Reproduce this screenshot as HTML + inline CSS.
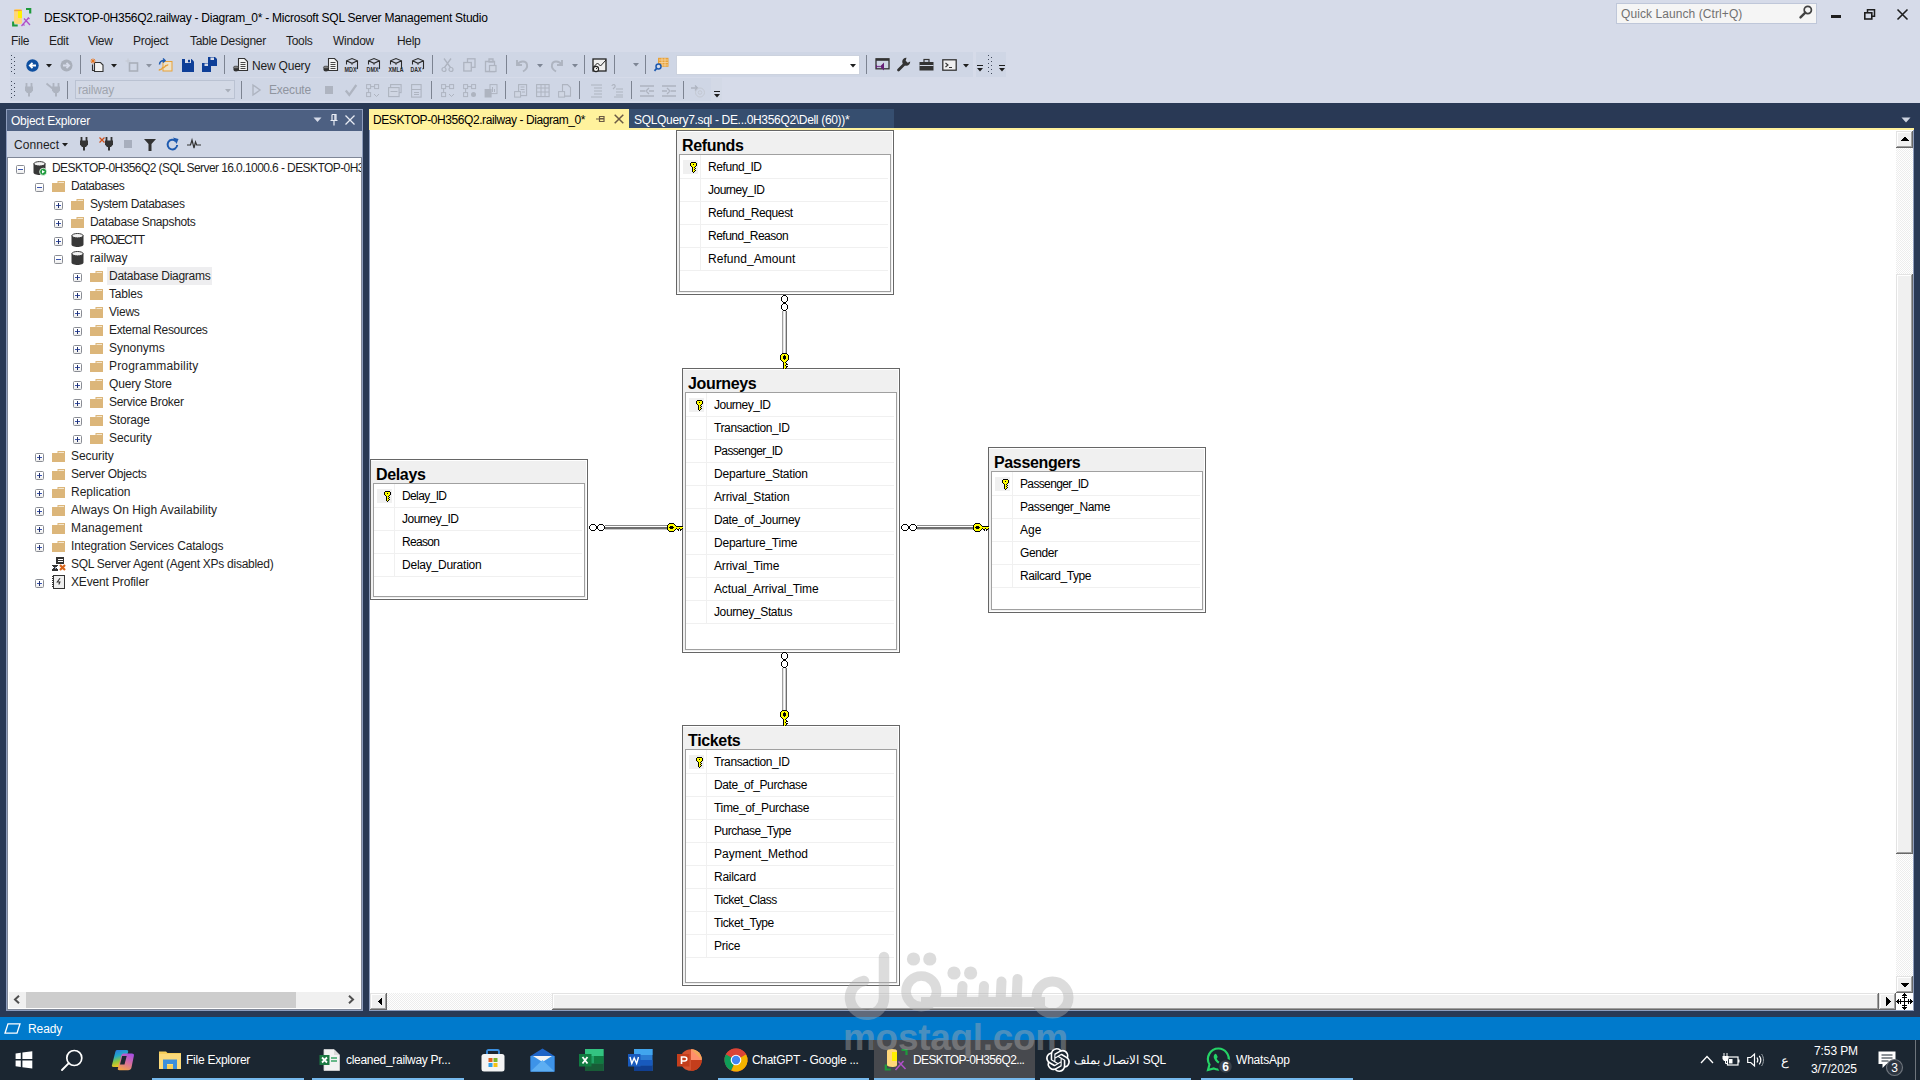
<!DOCTYPE html>
<html><head><meta charset="utf-8"><title>SSMS</title>
<style>
*{margin:0;padding:0;box-sizing:border-box}
html,body{width:1920px;height:1080px;overflow:hidden}
body{position:relative;background:#D6DBE9;font-family:"Liberation Sans",sans-serif;font-size:12px;color:#1E1E1E}
.a{position:absolute}
.t{position:absolute;white-space:nowrap;line-height:16px;letter-spacing:-0.25px}
svg{position:absolute;overflow:visible}
.tb{position:absolute;background:#CFD6E5}
.sep{position:absolute;width:1px;background:#7C8391}
.grip{position:absolute;width:5px;background-image:linear-gradient(#414A5C 0 1px,transparent 1px),linear-gradient(#414A5C 0 1px,transparent 1px);background-size:1px 4px,1px 4px;background-repeat:repeat-y;background-position:0 0,3px 2px}
.row .t{color:#000}
.tree .t{color:#1E1E1E}
.ex{position:absolute;width:9px;height:9px;border:1px solid #8A8D94;border-radius:1.5px;background:linear-gradient(#fff 0,#fff 45%,#ECECEC 100%)}
.ex:before{content:"";position:absolute;left:1px;top:3px;width:5px;height:1px;background:#3A54B0}
.ex.p:after{content:"";position:absolute;left:3px;top:1px;width:1px;height:5px;background:#22306A}
.fold{position:absolute;width:13px;height:10px;background:#DCB67A}
.fold:before{content:"";position:absolute;left:0;top:-2px;width:6px;height:2px;background:#DCB67A}
.dtab{position:absolute;border:1px solid #646464;background:#F0F0F0}
.dtab .hd{position:absolute;left:5px;font-weight:bold;font-size:15px;letter-spacing:-0.2px;color:#000;white-space:nowrap}
.grid{position:absolute;border:1px solid #A0A0A0;border-right-color:#C8C8C8;border-bottom-color:#C8C8C8;background:#fff}
.cr{position:absolute;left:0;right:0;height:23px;border-bottom:1px solid #F0F0F0}
.cr .sel{position:absolute;left:0;top:0;width:21px;height:22px;border-right:1px solid #F0F0F0}
.cr .t{left:28px;top:3px;color:#000;letter-spacing:-0.35px}
.tbicon{position:absolute}
</style></head><body>
<!-- TITLE BAR -->
<svg style="left:12px;top:7px" width="20" height="20" viewBox="0 0 20 20">
 <path d="M1.2 14.5v4h4.5" stroke="#1E9A3C" stroke-width="2.2" fill="none"/>
 <path d="M14 2h4.2v4.5" stroke="#1E9A3C" stroke-width="2.2" fill="none"/>
 <path d="M2 3.5c0-1 1-1.5 4-1.5s4 .5 4 1.5v12c0 1-1 1.5-3 1.5s-5-.5-5-1.5z" fill="#FFD77A"/>
 <path d="M2.2 3.5h7.6" stroke="#F0A040" stroke-width="1.4"/>
 <rect x="6" y="4" width="4" height="7" fill="#FFF000"/>
 <path d="M9.5 19l7-8M12 11.5l6 6.5" stroke="#B050C8" stroke-width="1.3"/>
 <path d="M16 10.5l1.5 1.5M11 17l1.5 1.5" stroke="#B050C8" stroke-width="1.2"/>
</svg>
<div class="t" style="left:44px;top:10px;color:#000;letter-spacing:-0.25px">DESKTOP-0H356Q2.railway - Diagram_0* - Microsoft SQL Server Management Studio</div>
<div class="a" style="left:1616px;top:3px;width:201px;height:21px;background:#F5F5F5;border:1px solid #BFC7D9"></div>
<div class="t" style="left:1621px;top:6px;color:#717171;letter-spacing:0.08px">Quick Launch (Ctrl+Q)</div>
<svg style="left:1799px;top:5px" width="14" height="14" viewBox="0 0 14 14"><circle cx="8.8" cy="5" r="3.6" stroke="#424242" stroke-width="1.7" fill="none"/><path d="M6.3 7.6L1.5 12.4" stroke="#424242" stroke-width="2.4" stroke-linecap="round"/></svg>
<div class="a" style="left:1831px;top:15px;width:10px;height:3px;background:#1E1E1E"></div>
<svg style="left:1864px;top:9px" width="12" height="11" viewBox="0 0 12 11"><path d="M3.5 3V0.8h7v6.4H8" stroke="#1E1E1E" stroke-width="1.5" fill="none"/><rect x="0.8" y="3.8" width="7" height="6.2" stroke="#1E1E1E" stroke-width="1.6" fill="none"/></svg>
<svg style="left:1897px;top:9px" width="11" height="11" viewBox="0 0 11 11"><path d="M0.5 0.5l10 10M10.5 0.5l-10 10" stroke="#1E1E1E" stroke-width="1.6"/></svg>
<!-- MENU -->
<div class="t" style="left:11px;top:33px;letter-spacing:-0.3px">File</div>
<div class="t" style="left:49px;top:33px;letter-spacing:-0.3px">Edit</div>
<div class="t" style="left:88px;top:33px;letter-spacing:-0.3px">View</div>
<div class="t" style="left:133px;top:33px;letter-spacing:-0.3px">Project</div>
<div class="t" style="left:190px;top:33px;letter-spacing:-0.3px">Table Designer</div>
<div class="t" style="left:286px;top:33px;letter-spacing:-0.3px">Tools</div>
<div class="t" style="left:333px;top:33px;letter-spacing:-0.3px">Window</div>
<div class="t" style="left:397px;top:33px;letter-spacing:-0.3px">Help</div>
<!-- TOOLBARS -->
<div class="tb" style="left:10px;top:52px;width:963px;height:25px"></div>
<div class="tb" style="left:975px;top:52px;width:31px;height:25px"></div>
<div class="tb" style="left:10px;top:78px;width:712px;height:23px"></div>
<div class="grip" style="left:11px;top:55px;height:19px"></div>
<div class="grip" style="left:11px;top:81px;height:17px"></div>
<div class="sep" style="left:80px;top:55px;height:19px"></div>
<div class="sep" style="left:224px;top:55px;height:19px"></div>
<div class="sep" style="left:432px;top:55px;height:19px"></div>
<div class="sep" style="left:506px;top:55px;height:19px"></div>
<div class="sep" style="left:584px;top:55px;height:19px"></div>
<div class="sep" style="left:614px;top:55px;height:19px"></div>
<div class="sep" style="left:645px;top:55px;height:19px"></div>
<div class="sep" style="left:866px;top:55px;height:19px"></div>
<div class="sep" style="left:67px;top:81px;height:18px"></div>
<div class="sep" style="left:241px;top:81px;height:18px"></div>
<div class="sep" style="left:431px;top:81px;height:18px"></div>
<div class="sep" style="left:505px;top:81px;height:18px"></div>
<div class="sep" style="left:579px;top:81px;height:18px"></div>
<div class="sep" style="left:631px;top:81px;height:18px"></div>
<div class="sep" style="left:683px;top:81px;height:18px"></div>
<svg style="left:26px;top:59px" width="13" height="13" viewBox="0 0 13 13"><circle cx="6.5" cy="6.5" r="6.2" fill="#0E4FA0"/><path d="M10 6.5H4M6.5 3.8L3.8 6.5l2.7 2.7" stroke="#fff" stroke-width="1.8" fill="none"/></svg>
<svg style="left:46px;top:64px" width="6" height="4" viewBox="0 0 6 4"><path d="M0 0h6l-3 3.5z" fill="#1E1E1E"/></svg>
<svg style="left:60px;top:59px" width="13" height="13" viewBox="0 0 13 13"><circle cx="6.5" cy="6.5" r="6" fill="#A9AFBA"/><path d="M3 6.5h6M6.5 3.8l2.7 2.7-2.7 2.7" stroke="#D6DBE9" stroke-width="1.8" fill="none"/></svg>
<svg style="left:90px;top:58px" width="14" height="14" viewBox="0 0 14 14"><path d="M4.5 4.5h6l2.5 2.5v6.5h-8.5z" fill="#F3F3F3" stroke="#333" stroke-width="1.1"/><path d="M2.5 6.5v6h2" stroke="#333" stroke-width="1.1" fill="none"/><path d="M3 0.5v5M0.5 3h5M1.2 1.2l3.6 3.6M4.8 1.2L1.2 4.8" stroke="#E8741E" stroke-width="1"/></svg>
<svg style="left:111px;top:64px" width="6" height="4" viewBox="0 0 6 4"><path d="M0 0h6l-3 3.5z" fill="#1E1E1E"/></svg>
<svg style="left:125px;top:58px" width="14" height="14" viewBox="0 0 14 14"><rect x="4.5" y="5" width="8" height="8" fill="none" stroke="#A9AFBA" stroke-width="1.6"/><path d="M3 0.5v5M0.5 3h5" stroke="#C4C9D3" stroke-width="1"/></svg>
<svg style="left:146px;top:64px" width="6" height="4" viewBox="0 0 6 4"><path d="M0 0h6l-3 3.5z" fill="#8C93A0"/></svg>
<svg style="left:158px;top:58px" width="15" height="14" viewBox="0 0 15 14"><rect x="5" y="3.5" width="9" height="9.5" fill="#EEE2C8" stroke="#E8A23A" stroke-width="1"/><path d="M1 12.5c1-2 2 0 3-2s2 0 3-2 2 0 3-2" stroke="#E8A23A" stroke-width="1.5" fill="none"/><path d="M1.5 6.5c0-3 2-4 5-4M5 0.5l2 2-2 2" stroke="#1E5AAF" stroke-width="1.5" fill="none"/></svg>
<svg style="left:182px;top:59px" width="12" height="13" viewBox="0 0 12 13"><path d="M0 0h9.5l2.5 2.5V13H0z" fill="#0E3F98"/><rect x="3" y="0" width="6" height="4" fill="#D6DBE9"/><rect x="6" y="0.8" width="2" height="2.5" fill="#0E3F98"/></svg>
<svg style="left:202px;top:57px" width="15" height="15" viewBox="0 0 15 15"><path d="M6 0h7l2 2v7H6z" fill="#0E3F98"/><path d="M0 6h7l2 2v7H0z" fill="#0E3F98"/><rect x="8.5" y="0.5" width="3.5" height="2.5" fill="#D6DBE9"/><rect x="2.5" y="6.5" width="3.5" height="2.5" fill="#D6DBE9"/></svg>
<svg style="left:233px;top:58px" width="15" height="14" viewBox="0 0 15 14"><path d="M5.5 0.5h6l3 3v9h-9z" fill="#F4F4F4" stroke="#333" stroke-width="1.1"/><path d="M7.5 4.5h5M7.5 6.5h5M7.5 8.5h5M7.5 10.5h5" stroke="#333" stroke-width="0.9"/><ellipse cx="3" cy="11" rx="2.6" ry="2.5" fill="#333"/><ellipse cx="3" cy="9.3" rx="2.6" ry="1.2" fill="#888" stroke="#333" stroke-width="0.6"/></svg>
<div class="t" style="left:252px;top:58px;letter-spacing:-0.2px">New Query</div>
<svg style="left:323px;top:58px" width="15" height="14" viewBox="0 0 15 14"><path d="M5.5 0.5h6l3 3v9h-9z" fill="#F4F4F4" stroke="#333" stroke-width="1.1"/><path d="M7.5 4.5h5M7.5 6.5h5M7.5 8.5h5M7.5 10.5h5" stroke="#333" stroke-width="0.9"/><ellipse cx="3" cy="11" rx="2.6" ry="2.5" fill="#333"/><ellipse cx="3" cy="9.3" rx="2.6" ry="1.2" fill="#888" stroke="#333" stroke-width="0.6"/></svg>
<svg style="left:344px;top:58px" width="16" height="15" viewBox="0 0 16 15"><path d="M2.5 6.5V2.8L8 0.5l5.5 2.3v7.7l-1 .5M2.5 2.8L8 5.3l5.5-2.5M8 5.3v1.5" stroke="#2A2A2A" stroke-width="1.1" fill="none"/><text x="0.5" y="13.8" textLength="12" lengthAdjust="spacingAndGlyphs" font-family="Liberation Sans" font-weight="bold" font-size="7.5" fill="#2A2A2A">MDX</text></svg>
<svg style="left:366px;top:58px" width="16" height="15" viewBox="0 0 16 15"><path d="M2.5 6.5V2.8L8 0.5l5.5 2.3v7.7l-1 .5M2.5 2.8L8 5.3l5.5-2.5M8 5.3v1.5" stroke="#2A2A2A" stroke-width="1.1" fill="none"/><text x="0.5" y="13.8" textLength="12" lengthAdjust="spacingAndGlyphs" font-family="Liberation Sans" font-weight="bold" font-size="7.5" fill="#2A2A2A">DMX</text></svg>
<svg style="left:388px;top:58px" width="16" height="15" viewBox="0 0 16 15"><path d="M2.5 6.5V2.8L8 0.5l5.5 2.3v7.7l-1 .5M2.5 2.8L8 5.3l5.5-2.5M8 5.3v1.5" stroke="#2A2A2A" stroke-width="1.1" fill="none"/><text x="0.5" y="13.8" textLength="15" lengthAdjust="spacingAndGlyphs" font-family="Liberation Sans" font-weight="bold" font-size="7.5" fill="#2A2A2A">XMLA</text></svg>
<svg style="left:410px;top:58px" width="16" height="15" viewBox="0 0 16 15"><path d="M2.5 6.5V2.8L8 0.5l5.5 2.3v7.7l-1 .5M2.5 2.8L8 5.3l5.5-2.5M8 5.3v1.5" stroke="#2A2A2A" stroke-width="1.1" fill="none"/><text x="0.5" y="13.8" textLength="11" lengthAdjust="spacingAndGlyphs" font-family="Liberation Sans" font-weight="bold" font-size="7.5" fill="#2A2A2A">DAX</text></svg>
<svg style="left:441px;top:58px" width="13" height="14" viewBox="0 0 13 14"><path d="M3 0.5l6.5 9M10 0.5L3.5 9.5" stroke="#AEB4C0" stroke-width="1.3"/><circle cx="3" cy="11.5" r="2" fill="none" stroke="#AEB4C0" stroke-width="1.2"/><circle cx="10" cy="11.5" r="2" fill="none" stroke="#AEB4C0" stroke-width="1.2"/></svg>
<svg style="left:463px;top:58px" width="13" height="14" viewBox="0 0 13 14"><rect x="4.5" y="0.8" width="7.5" height="8.5" fill="none" stroke="#AEB4C0" stroke-width="1.3"/><rect x="0.8" y="4.5" width="7.5" height="8.5" fill="#D0D6E3" stroke="#AEB4C0" stroke-width="1.3"/></svg>
<svg style="left:485px;top:58px" width="12" height="14" viewBox="0 0 12 14"><path d="M2.5 3.5h7v10h-9v-10h2M4 1h4v3H4z" fill="none" stroke="#AEB4C0" stroke-width="1.3"/><rect x="4.5" y="7.5" width="6.5" height="6" fill="#D0D6E3" stroke="#AEB4C0" stroke-width="1.2"/></svg>
<svg style="left:515px;top:58px" width="14" height="14" viewBox="0 0 14 14"><path d="M2 2v5h5M2.5 6.5C4.5 3 11 2 12 6.5c.7 3-1.5 5.5-4 7" stroke="#AEB4C0" stroke-width="1.9" fill="none"/></svg>
<svg style="left:537px;top:64px" width="6" height="4" viewBox="0 0 6 4"><path d="M0 0h6l-3 3.5z" fill="#7D8594"/></svg>
<svg style="left:550px;top:58px" width="14" height="14" viewBox="0 0 14 14"><path d="M12 2v5H7M11.5 6.5C9.5 3 3 2 2 6.5c-.7 3 1.5 5.5 4 7" stroke="#AEB4C0" stroke-width="1.9" fill="none"/></svg>
<svg style="left:572px;top:64px" width="6" height="4" viewBox="0 0 6 4"><path d="M0 0h6l-3 3.5z" fill="#7D8594"/></svg>
<svg style="left:592px;top:58px" width="15" height="14" viewBox="0 0 15 14"><rect x="1" y="1" width="13" height="12" fill="#F0F0F0" stroke="#222" stroke-width="1.3"/><path d="M1.5 9l4-4 3 3 5.5-6" stroke="#222" stroke-width="1" fill="none"/><circle cx="4" cy="11" r="2.6" fill="#F0F0F0" stroke="#222" stroke-width="1.1"/><path d="M4 11l1.3-1.3" stroke="#222"/></svg>
<svg style="left:633px;top:63px" width="6" height="4" viewBox="0 0 6 4"><path d="M0 0h6l-3 3.5z" fill="#7D8594"/></svg>
<svg style="left:654px;top:57px" width="15" height="15" viewBox="0 0 15 15"><rect x="4" y="0.8" width="10.5" height="9" fill="#E8A23A"/><path d="M5 3h9M5 5.5h9M5 8h9M8 1v8.5M11 1v8.5" stroke="#F6D7A5" stroke-width="0.8"/><circle cx="4.5" cy="9.5" r="2.5" fill="#D6DBE9" stroke="#1E5AAF" stroke-width="1.5"/><path d="M3 11L0.5 13.8" stroke="#1E5AAF" stroke-width="1.8"/></svg>
<div class="a" style="left:676px;top:55px;width:184px;height:20px;background:#fff;border:1px solid #CCD2DE"></div>
<svg style="left:850px;top:64px" width="6" height="4" viewBox="0 0 6 4"><path d="M0 0h6l-3 3.5z" fill="#1E1E1E"/></svg>
<svg style="left:875px;top:58px" width="15" height="14" viewBox="0 0 15 14"><rect x="1" y="0.8" width="13" height="10" fill="none" stroke="#333" stroke-width="1.3"/><rect x="1" y="0.8" width="13" height="2" fill="#333"/><path d="M1 6.5l3 3 5-5v8l-5-5-3 3z" fill="#68217A"/></svg>
<svg style="left:897px;top:57px" width="14" height="15" viewBox="0 0 14 15"><path d="M9.5 0.8a4 4 0 1 0 3.7 3.7l-2.5 1.2-2-2z" fill="#333"/><path d="M8 6.5L1.5 13" stroke="#333" stroke-width="2.8" stroke-linecap="round"/></svg>
<svg style="left:919px;top:59px" width="15" height="12" viewBox="0 0 15 12"><rect x="0.5" y="3" width="14" height="8.5" fill="#333"/><rect x="5" y="0.5" width="5" height="3" fill="none" stroke="#333" stroke-width="1.2"/><path d="M0.5 6.5h14" stroke="#D0D6E3" stroke-width="1"/></svg>
<svg style="left:942px;top:59px" width="15" height="12" viewBox="0 0 15 12"><rect x="0.8" y="0.8" width="13.4" height="10.4" fill="#F0F0F0" stroke="#333" stroke-width="1.3"/><path d="M3.5 4l2.5 2-2.5 2M7 8.5h3" stroke="#333" stroke-width="1.1" fill="none"/></svg>
<svg style="left:963px;top:64px" width="6" height="4" viewBox="0 0 6 4"><path d="M0 0h6l-3 3.5z" fill="#1E1E1E"/></svg>
<svg style="left:977px;top:65px" width="6" height="8" viewBox="0 0 6 8"><path d="M0 0.5h6" stroke="#1E1E1E"/><path d="M0 3h6l-3 3.5z" fill="#1E1E1E"/></svg>
<div class="a" style="left:975px;top:52px;width:1px;height:25px;background:#D6DBE9"></div>
<div class="a" style="left:985px;top:52px;width:11px;height:25px;background:#CFD6E5"></div>
<div class="grip" style="left:988px;top:55px;height:19px"></div>
<svg style="left:999px;top:65px" width="6" height="8" viewBox="0 0 6 8"><path d="M0 0.5h6" stroke="#1E1E1E"/><path d="M0 3h6l-3 3.5z" fill="#1E1E1E"/></svg>
<svg style="left:25px;top:83px" width="8" height="14" viewBox="0 0 8 14"><path d="M1.5 0v4M6.5 0v4" stroke="#AEB4C0" stroke-width="1.8"/><path d="M0 3.5h8v4l-2 2.5h-4l-2-2.5z" fill="#AEB4C0"/><rect x="3" y="9" width="2" height="4.5" fill="#AEB4C0"/></svg>
<svg style="left:46px;top:83px" width="14" height="14" viewBox="0 0 14 14"><path d="M7.5 0v4M12.5 0v4" stroke="#AEB4C0" stroke-width="1.8"/><path d="M6 3.5h8v4l-2 2.5h-4l-2-2.5z" fill="#AEB4C0"/><rect x="9" y="9" width="2" height="4.5" fill="#AEB4C0"/><path d="M0.5 0.5l6 5" stroke="#AEB4C0" stroke-width="1.8"/></svg>
<div class="a" style="left:75px;top:80px;width:160px;height:19px;border:1px solid #BAC2D2;background:#D3D9E6"></div>
<div class="t" style="left:78px;top:82px;color:#A0A5AE;letter-spacing:-0.2px">railway</div>
<svg style="left:225px;top:89px" width="6" height="4" viewBox="0 0 6 4"><path d="M0 0h6l-3 3.5z" fill="#A9AFBA"/></svg>
<svg style="left:252px;top:84px" width="9" height="12" viewBox="0 0 9 12"><path d="M1 1l7 5-7 5z" fill="none" stroke="#AEB4C0" stroke-width="1.4"/></svg>
<div class="t" style="left:269px;top:82px;color:#8F959F;letter-spacing:-0.2px">Execute</div>
<div class="a" style="left:325px;top:86px;width:8px;height:8px;background:#AEB4C0"></div>
<svg style="left:345px;top:84px" width="12" height="12" viewBox="0 0 12 12"><path d="M0.8 6.5l3.5 4.5 7-10" stroke="#AEB4C0" stroke-width="2.2" fill="none"/></svg>
<svg style="left:366px;top:84px" width="15" height="15" viewBox="0 0 15 15"><rect x="0.6" y="0.6" width="4" height="4" fill="none" stroke="#AEB4C0"/><rect x="8.6" y="0.6" width="4" height="4" fill="none" stroke="#AEB4C0"/><path d="M4.6 2.6h4M2.6 4.6v4" stroke="#AEB4C0"/><rect x="0.6" y="8.6" width="4" height="4" fill="none" stroke="#AEB4C0"/><path d="M8 10l2.5 2.5L13 10" fill="none" stroke="#AEB4C0"/></svg>
<svg style="left:388px;top:84px" width="15" height="15" viewBox="0 0 15 15"><rect x="2.6" y="0.6" width="10.5" height="8" fill="none" stroke="#AEB4C0" stroke-width="1.1"/><rect x="0.6" y="3.6" width="10.5" height="9" fill="#D0D6E3" stroke="#AEB4C0" stroke-width="1.1"/><path d="M2.5 7.5h7" stroke="#AEB4C0"/></svg>
<svg style="left:410px;top:84px" width="15" height="15" viewBox="0 0 15 15"><rect x="1.6" y="0.6" width="9.5" height="12.5" fill="none" stroke="#AEB4C0" stroke-width="1.1"/><path d="M1.6 5.5h9.5M4 8.5h5M4 10.5h5" stroke="#AEB4C0"/></svg>
<svg style="left:441px;top:84px" width="15" height="15" viewBox="0 0 15 15"><rect x="0.6" y="0.6" width="4" height="4" fill="none" stroke="#AEB4C0"/><rect x="8.6" y="0.6" width="4" height="4" fill="none" stroke="#AEB4C0"/><path d="M4.6 2.6h4M2.6 4.6v4" stroke="#AEB4C0"/><rect x="0.6" y="8.6" width="4" height="4" fill="none" stroke="#AEB4C0"/><path d="M8 10l2.5 2.5L13 10" fill="none" stroke="#AEB4C0"/></svg>
<svg style="left:463px;top:84px" width="15" height="15" viewBox="0 0 15 15"><rect x="0.6" y="0.6" width="4" height="4" fill="none" stroke="#AEB4C0"/><rect x="8.6" y="0.6" width="4" height="4" fill="none" stroke="#AEB4C0"/><path d="M4.6 2.6h4M2.6 4.6v4" stroke="#AEB4C0"/><rect x="0.6" y="8.6" width="4" height="4" fill="none" stroke="#AEB4C0"/><circle cx="10.5" cy="10.5" r="2.5" fill="#AEB4C0"/></svg>
<svg style="left:484px;top:84px" width="15" height="15" viewBox="0 0 15 15"><rect x="0.6" y="5" width="7" height="8.5" fill="#AEB4C0"/><rect x="6" y="0.6" width="7" height="9" fill="none" stroke="#AEB4C0"/><path d="M8.5 3v5M10.5 5v3" stroke="#AEB4C0"/></svg>
<svg style="left:514px;top:84px" width="15" height="15" viewBox="0 0 15 15"><rect x="4.6" y="0.6" width="8" height="11" fill="none" stroke="#AEB4C0" stroke-width="1.1"/><path d="M6.5 3h4M6.5 5.5h4M8 8h3" stroke="#AEB4C0"/><rect x="0.6" y="7.6" width="6" height="5.5" fill="#D0D6E3" stroke="#AEB4C0"/></svg>
<svg style="left:536px;top:84px" width="15" height="15" viewBox="0 0 15 15"><rect x="0.6" y="0.6" width="12.5" height="12" fill="none" stroke="#AEB4C0" stroke-width="1.1"/><path d="M0.6 4h12.5M0.6 8h12.5M5 0.6v12M9 0.6v12" stroke="#AEB4C0"/></svg>
<svg style="left:558px;top:84px" width="15" height="15" viewBox="0 0 15 15"><path d="M4.5 0.6h5l3 3v8.5h-8z" fill="none" stroke="#AEB4C0" stroke-width="1.1"/><rect x="0.6" y="7.6" width="6" height="5.5" fill="#D0D6E3" stroke="#AEB4C0"/></svg>
<svg style="left:590px;top:84px" width="15" height="15" viewBox="0 0 15 15"><path d="M1 1h11M4 4h8M4 7h8M4 10h8M1 13h11" stroke="#AEB4C0" stroke-width="1.1"/></svg>
<svg style="left:611px;top:84px" width="15" height="15" viewBox="0 0 15 15"><path d="M1 2c0-2 4-2 3 1l-2 2M5 5h7M5 8h7M5 11h7M3 13h9" stroke="#AEB4C0" stroke-width="1.1" fill="none"/></svg>
<svg style="left:640px;top:84px" width="15" height="15" viewBox="0 0 15 15"><path d="M0 7h5M9 7h5M0 2h14M0 12h14M9 4l-3 3 3 3" stroke="#AEB4C0" stroke-width="1.3" fill="none"/></svg>
<svg style="left:662px;top:84px" width="15" height="15" viewBox="0 0 15 15"><path d="M0 7h5M9 7h5M0 2h14M0 12h14M5 4l3 3-3 3" stroke="#AEB4C0" stroke-width="1.3" fill="none"/></svg>
<svg style="left:691px;top:84px" width="15" height="15" viewBox="0 0 15 15"><path d="M0 4h6M4 1.5L6.5 4 4 6.5" stroke="#AEB4C0" stroke-width="1.3" fill="none"/><circle cx="9" cy="8.5" r="4.5" fill="none" stroke="#C4C9D3" stroke-width="1"/><circle cx="9" cy="8.5" r="1.8" fill="none" stroke="#C4C9D3" stroke-width="1"/></svg>
<div class="a" style="left:711px;top:78px;width:11px;height:23px;background:#D3D9E6"></div>
<svg style="left:714px;top:91px" width="6" height="8" viewBox="0 0 6 8"><path d="M0 0.5h6" stroke="#1E1E1E"/><path d="M0 3h6l-3 3.5z" fill="#1E1E1E"/></svg>
<!-- DARK FRAME -->
<div class="a" style="left:0;top:103px;width:1920px;height:914px;background:#293955"></div>
<!-- OBJECT EXPLORER -->
<div class="a" style="left:6px;top:109px;width:357px;height:902px;background:#CFD6E5;border:1px solid #8E9DBD"></div>
<div class="a" style="left:7px;top:110px;width:355px;height:21px;background:#4D6082"></div>
<div class="t" style="left:11px;top:113px;color:#fff">Object Explorer</div>
<svg style="left:313px;top:117px" width="10" height="6" viewBox="0 0 10 6"><path d="M0.5 0.5h8l-4 4.5z" fill="#D6DBE9"/></svg>
<svg style="left:330px;top:114px" width="8" height="12" viewBox="0 0 8 12"><path d="M2 0.5h4v6M2 0.5v6M0.5 6.5h7M4 6.5v5" stroke="#E8ECF4" stroke-width="1.2" fill="none"/><rect x="4.3" y="1" width="1.4" height="5" fill="#E8ECF4"/></svg>
<svg style="left:345px;top:115px" width="10" height="10" viewBox="0 0 10 10"><path d="M0.5 0.5l9 9M9.5 0.5l-9 9" stroke="#E8ECF4" stroke-width="1.3"/></svg>
<div class="t" style="left:14px;top:137px;color:#1E1E1E;letter-spacing:0.05px">Connect</div>
<svg style="left:62px;top:143px" width="6" height="4" viewBox="0 0 6 4"><path d="M0 0h6l-3 3.5z" fill="#1E1E1E"/></svg>
<svg style="left:80px;top:137px" width="8" height="14" viewBox="0 0 8 14"><path d="M1.5 0v4M6.5 0v4" stroke="#333" stroke-width="1.8"/><path d="M0 3.5h8v4l-2 2.5h-4l-2-2.5z" fill="#333"/><rect x="3" y="9" width="2" height="4.5" fill="#333"/></svg>
<svg style="left:99px;top:137px" width="6" height="6" viewBox="0 0 6 6"><path d="M0.5 0.5l5 5M5.5 0.5l-5 5" stroke="#D0501A" stroke-width="1.2"/></svg>
<svg style="left:105px;top:137px" width="8" height="14" viewBox="0 0 8 14"><path d="M1.5 0v4M6.5 0v4" stroke="#333" stroke-width="1.8"/><path d="M0 3.5h8v4l-2 2.5h-4l-2-2.5z" fill="#333"/><rect x="3" y="9" width="2" height="4.5" fill="#333"/></svg>
<div class="a" style="left:124px;top:140px;width:8px;height:8px;background:#A7AEBD"></div>
<svg style="left:144px;top:139px" width="12" height="12" viewBox="0 0 12 12"><path d="M0 0h12l-4.5 5v7h-3v-7z" fill="#333"/></svg>
<svg style="left:166px;top:137px" width="13" height="14" viewBox="0 0 13 14"><path d="M9.8 4.2A4.8 4.8 0 1 0 11.2 8" stroke="#1E5AAF" stroke-width="2" fill="none"/><path d="M7 0.5l5.5 1.5-2 5z" fill="#1E5AAF"/></svg>
<svg style="left:187px;top:139px" width="14" height="10" viewBox="0 0 14 10"><path d="M0 6h3.5l1.5-5 2 8 1.5-6 1.2 3H14" stroke="#333" stroke-width="1.2" fill="none"/></svg>
<div class="a" style="left:7px;top:157px;width:355px;height:853px;background:#fff;border:1px solid #7F8797"></div>
<div class="a tree" style="left:7px;top:159px;width:354px;height:832px;overflow:hidden">
<div class="ex " style="left:9px;top:6px"></div>
<svg style="left:26px;top:2px" width="14" height="15" viewBox="0 0 14 15"><path d="M0.5 2.5v9c0 1.4 2.7 2.5 6 2.5s6-1.1 6-2.5v-9z" fill="#383838"/><ellipse cx="6.5" cy="2.8" rx="5.6" ry="2.2" fill="#F2F2F2" stroke="#383838" stroke-width="1"/><circle cx="10.2" cy="10.8" r="3.6" fill="#1E9A3C" stroke="#fff" stroke-width="0.8"/><path d="M9 9l3 1.8-3 1.8z" fill="#fff"/></svg>
<div class="t" style="left:45px;top:1px;letter-spacing:-0.58px">DESKTOP-0H356Q2 (SQL Server 16.0.1000.6 - DESKTOP-0H356Q2\Dell)</div>
<div class="ex " style="left:28px;top:24px"></div>
<svg style="left:45px;top:22px" width="13" height="11" viewBox="0 0 13 11"><path d="M0 2h5.5V0H13v11H0z" fill="#DCB67A"/><path d="M6.5 1.5h5.5" stroke="#F4E7CF" stroke-width="1"/></svg>
<div class="t" style="left:64px;top:19px;letter-spacing:-0.458px">Databases</div>
<div class="ex p" style="left:47px;top:42px"></div>
<svg style="left:64px;top:40px" width="13" height="11" viewBox="0 0 13 11"><path d="M0 2h5.5V0H13v11H0z" fill="#DCB67A"/><path d="M6.5 1.5h5.5" stroke="#F4E7CF" stroke-width="1"/></svg>
<div class="t" style="left:83px;top:37px;letter-spacing:-0.388px">System Databases</div>
<div class="ex p" style="left:47px;top:60px"></div>
<svg style="left:64px;top:58px" width="13" height="11" viewBox="0 0 13 11"><path d="M0 2h5.5V0H13v11H0z" fill="#DCB67A"/><path d="M6.5 1.5h5.5" stroke="#F4E7CF" stroke-width="1"/></svg>
<div class="t" style="left:83px;top:55px;letter-spacing:-0.328px">Database Snapshots</div>
<div class="ex p" style="left:47px;top:78px"></div>
<svg style="left:64px;top:74px" width="13" height="14" viewBox="0 0 13 14"><path d="M0.5 2.5v9c0 1.4 2.7 2.5 6 2.5s6-1.1 6-2.5v-9z" fill="#383838"/><ellipse cx="6.5" cy="2.7" rx="5.6" ry="2.2" fill="#F2F2F2" stroke="#383838" stroke-width="1"/></svg>
<div class="t" style="left:83px;top:73px;letter-spacing:-1.179px">PROJECTT</div>
<div class="ex " style="left:47px;top:96px"></div>
<svg style="left:64px;top:92px" width="13" height="14" viewBox="0 0 13 14"><path d="M0.5 2.5v9c0 1.4 2.7 2.5 6 2.5s6-1.1 6-2.5v-9z" fill="#383838"/><ellipse cx="6.5" cy="2.7" rx="5.6" ry="2.2" fill="#F2F2F2" stroke="#383838" stroke-width="1"/></svg>
<div class="t" style="left:83px;top:91px;letter-spacing:0.037px">railway</div>
<div class="a" style="left:100px;top:108px;width:105px;height:18px;background:#EEEEF0"></div>
<div class="ex p" style="left:66px;top:114px"></div>
<svg style="left:83px;top:112px" width="13" height="11" viewBox="0 0 13 11"><path d="M0 2h5.5V0H13v11H0z" fill="#DCB67A"/><path d="M6.5 1.5h5.5" stroke="#F4E7CF" stroke-width="1"/></svg>
<div class="t" style="left:102px;top:109px;letter-spacing:-0.274px">Database Diagrams</div>
<div class="ex p" style="left:66px;top:132px"></div>
<svg style="left:83px;top:130px" width="13" height="11" viewBox="0 0 13 11"><path d="M0 2h5.5V0H13v11H0z" fill="#DCB67A"/><path d="M6.5 1.5h5.5" stroke="#F4E7CF" stroke-width="1"/></svg>
<div class="t" style="left:102px;top:127px;letter-spacing:-0.198px">Tables</div>
<div class="ex p" style="left:66px;top:150px"></div>
<svg style="left:83px;top:148px" width="13" height="11" viewBox="0 0 13 11"><path d="M0 2h5.5V0H13v11H0z" fill="#DCB67A"/><path d="M6.5 1.5h5.5" stroke="#F4E7CF" stroke-width="1"/></svg>
<div class="t" style="left:102px;top:145px;letter-spacing:-0.238px">Views</div>
<div class="ex p" style="left:66px;top:168px"></div>
<svg style="left:83px;top:166px" width="13" height="11" viewBox="0 0 13 11"><path d="M0 2h5.5V0H13v11H0z" fill="#DCB67A"/><path d="M6.5 1.5h5.5" stroke="#F4E7CF" stroke-width="1"/></svg>
<div class="t" style="left:102px;top:163px;letter-spacing:-0.345px">External Resources</div>
<div class="ex p" style="left:66px;top:186px"></div>
<svg style="left:83px;top:184px" width="13" height="11" viewBox="0 0 13 11"><path d="M0 2h5.5V0H13v11H0z" fill="#DCB67A"/><path d="M6.5 1.5h5.5" stroke="#F4E7CF" stroke-width="1"/></svg>
<div class="t" style="left:102px;top:181px;letter-spacing:-0.053px">Synonyms</div>
<div class="ex p" style="left:66px;top:204px"></div>
<svg style="left:83px;top:202px" width="13" height="11" viewBox="0 0 13 11"><path d="M0 2h5.5V0H13v11H0z" fill="#DCB67A"/><path d="M6.5 1.5h5.5" stroke="#F4E7CF" stroke-width="1"/></svg>
<div class="t" style="left:102px;top:199px;letter-spacing:0.187px">Programmability</div>
<div class="ex p" style="left:66px;top:222px"></div>
<svg style="left:83px;top:220px" width="13" height="11" viewBox="0 0 13 11"><path d="M0 2h5.5V0H13v11H0z" fill="#DCB67A"/><path d="M6.5 1.5h5.5" stroke="#F4E7CF" stroke-width="1"/></svg>
<div class="t" style="left:102px;top:217px;letter-spacing:-0.172px">Query Store</div>
<div class="ex p" style="left:66px;top:240px"></div>
<svg style="left:83px;top:238px" width="13" height="11" viewBox="0 0 13 11"><path d="M0 2h5.5V0H13v11H0z" fill="#DCB67A"/><path d="M6.5 1.5h5.5" stroke="#F4E7CF" stroke-width="1"/></svg>
<div class="t" style="left:102px;top:235px;letter-spacing:-0.292px">Service Broker</div>
<div class="ex p" style="left:66px;top:258px"></div>
<svg style="left:83px;top:256px" width="13" height="11" viewBox="0 0 13 11"><path d="M0 2h5.5V0H13v11H0z" fill="#DCB67A"/><path d="M6.5 1.5h5.5" stroke="#F4E7CF" stroke-width="1"/></svg>
<div class="t" style="left:102px;top:253px;letter-spacing:-0.204px">Storage</div>
<div class="ex p" style="left:66px;top:276px"></div>
<svg style="left:83px;top:274px" width="13" height="11" viewBox="0 0 13 11"><path d="M0 2h5.5V0H13v11H0z" fill="#DCB67A"/><path d="M6.5 1.5h5.5" stroke="#F4E7CF" stroke-width="1"/></svg>
<div class="t" style="left:102px;top:271px;letter-spacing:-0.081px">Security</div>
<div class="ex p" style="left:28px;top:294px"></div>
<svg style="left:45px;top:292px" width="13" height="11" viewBox="0 0 13 11"><path d="M0 2h5.5V0H13v11H0z" fill="#DCB67A"/><path d="M6.5 1.5h5.5" stroke="#F4E7CF" stroke-width="1"/></svg>
<div class="t" style="left:64px;top:289px;letter-spacing:-0.081px">Security</div>
<div class="ex p" style="left:28px;top:312px"></div>
<svg style="left:45px;top:310px" width="13" height="11" viewBox="0 0 13 11"><path d="M0 2h5.5V0H13v11H0z" fill="#DCB67A"/><path d="M6.5 1.5h5.5" stroke="#F4E7CF" stroke-width="1"/></svg>
<div class="t" style="left:64px;top:307px;letter-spacing:-0.276px">Server Objects</div>
<div class="ex p" style="left:28px;top:330px"></div>
<svg style="left:45px;top:328px" width="13" height="11" viewBox="0 0 13 11"><path d="M0 2h5.5V0H13v11H0z" fill="#DCB67A"/><path d="M6.5 1.5h5.5" stroke="#F4E7CF" stroke-width="1"/></svg>
<div class="t" style="left:64px;top:325px;letter-spacing:0.012px">Replication</div>
<div class="ex p" style="left:28px;top:348px"></div>
<svg style="left:45px;top:346px" width="13" height="11" viewBox="0 0 13 11"><path d="M0 2h5.5V0H13v11H0z" fill="#DCB67A"/><path d="M6.5 1.5h5.5" stroke="#F4E7CF" stroke-width="1"/></svg>
<div class="t" style="left:64px;top:343px;letter-spacing:0.059px">Always On High Availability</div>
<div class="ex p" style="left:28px;top:366px"></div>
<svg style="left:45px;top:364px" width="13" height="11" viewBox="0 0 13 11"><path d="M0 2h5.5V0H13v11H0z" fill="#DCB67A"/><path d="M6.5 1.5h5.5" stroke="#F4E7CF" stroke-width="1"/></svg>
<div class="t" style="left:64px;top:361px;letter-spacing:0.146px">Management</div>
<div class="ex p" style="left:28px;top:384px"></div>
<svg style="left:45px;top:382px" width="13" height="11" viewBox="0 0 13 11"><path d="M0 2h5.5V0H13v11H0z" fill="#DCB67A"/><path d="M6.5 1.5h5.5" stroke="#F4E7CF" stroke-width="1"/></svg>
<div class="t" style="left:64px;top:379px;letter-spacing:-0.155px">Integration Services Catalogs</div>
<svg style="left:45px;top:398px" width="15" height="15" viewBox="0 0 15 15" shape-rendering="crispEdges"><rect x="4" y="0" width="8" height="6.5" fill="#333"/><path d="M5.5 2.5h5M5.5 4h5" stroke="#fff" stroke-width="1"/><path d="M0 7.5h6v1.2L3.8 10.7 6 12.8V14H0v-1.2l2.2-2.1L0 8.7z" fill="#333"/><rect x="2.5" y="9.5" width="1" height="2" fill="#9AA6C8"/></svg><svg style="left:52px;top:405px" width="7" height="7" viewBox="0 0 7 7"><path d="M1 1l5 5M6 1L1 6" stroke="#D9651A" stroke-width="2.2"/></svg>
<div class="t" style="left:64px;top:397px;letter-spacing:-0.269px">SQL Server Agent (Agent XPs disabled)</div>
<div class="ex p" style="left:28px;top:420px"></div>
<svg style="left:45px;top:416px" width="13" height="14" viewBox="0 0 13 14" shape-rendering="crispEdges"><rect x="1.5" y="0.5" width="11" height="13" fill="#EEEEEE" stroke="#333" stroke-width="1"/><path d="M0 1.5h1M0 3.5h1M0 5.5h1M0 7.5h1M0 9.5h1M0 11.5h1" stroke="#333" stroke-width="1"/></svg><svg style="left:45px;top:416px" width="13" height="14" viewBox="0 0 13 14"><path d="M8 3.2L5.3 7h2.6L6.8 9.5" stroke="#333" stroke-width="1.1" fill="none"/></svg>
<div class="t" style="left:64px;top:415px;letter-spacing:-0.152px">XEvent Profiler</div>
</div>
<div class="a" style="left:9px;top:992px;width:351px;height:16px;background:#F0F0F0"></div>
<div class="a" style="left:26px;top:992px;width:270px;height:16px;background:#CDCDCD"></div>
<svg style="left:13px;top:995px" width="7" height="9" viewBox="0 0 7 9"><path d="M6 0.8L2 4.5l4 3.7" stroke="#505050" stroke-width="2" fill="none"/></svg>
<svg style="left:348px;top:995px" width="7" height="9" viewBox="0 0 7 9"><path d="M1 0.8l4 3.7-4 3.7" stroke="#505050" stroke-width="2" fill="none"/></svg>
<!-- DOC WELL -->
<div class="a" style="left:369px;top:109px;width:260px;height:21px;background:#FFF29D"></div>
<div class="t" style="left:373px;top:112px;color:#000;letter-spacing:-0.42px">DESKTOP-0H356Q2.railway - Diagram_0*</div>
<svg style="left:596px;top:115px" width="9" height="8" viewBox="0 0 9 8"><path d="M0 4h3M3.5 1v6M3.5 1.5h4.5v5H3.5" stroke="#6B5A45" stroke-width="1.2" fill="none"/><rect x="4" y="3" width="4" height="1.5" fill="#6B5A45"/></svg>
<svg style="left:614px;top:114px" width="10" height="10" viewBox="0 0 10 10"><path d="M0.7 0.7l8.6 8.6M9.3 0.7L0.7 9.3" stroke="#6B5A45" stroke-width="1.5"/></svg>
<div class="a" style="left:629px;top:109px;width:265px;height:19px;background:#364E6F"></div>
<div class="t" style="left:634px;top:112px;color:#fff;letter-spacing:-0.32px">SQLQuery7.sql - DE...0H356Q2\Dell (60))*</div>
<svg style="left:1901px;top:117px" width="10" height="6" viewBox="0 0 10 6"><path d="M0.5 0.5h9l-4.5 5z" fill="#CED4E0"/></svg>
<div class="a" style="left:369px;top:128px;width:1545px;height:2px;background:#FFF29D"></div>
<div class="a" style="left:369px;top:130px;width:1545px;height:881px;background:#fff;border:1px solid #8E9DBD;border-top:none"></div>
<!-- DIAGRAM -->
<div class="a" style="left:676px;top:130px;width:218px;height:165px;background:#F0F0F0;border:1px solid #666;box-shadow:inset -1px -1px 0 #fff, inset 0 1px 0 #fff"></div>
<div class="t" style="left:682px;top:138px;font-weight:bold;font-size:16px;letter-spacing:-0.35px;color:#000">Refunds</div>
<div class="a" style="left:679px;top:154px;width:212px;height:138px;background:#fff;border:1px solid #A0A0A0"></div>
<div class="a" style="left:700px;top:155px;width:1px;height:115px;background:#F0F0F0"></div>
<div class="a" style="left:680px;top:178px;width:208px;height:1px;background:#F0F0F0"></div>
<div class="a" style="left:680px;top:201px;width:208px;height:1px;background:#F0F0F0"></div>
<div class="a" style="left:680px;top:224px;width:208px;height:1px;background:#F0F0F0"></div>
<div class="a" style="left:680px;top:247px;width:208px;height:1px;background:#F0F0F0"></div>
<div class="a" style="left:680px;top:270px;width:208px;height:1px;background:#F0F0F0"></div>
<div class="a" style="left:683px;top:160px;width:15px;height:14px;background:#F0F0F0"></div>
<svg style="left:690px;top:162px" width="7" height="11" shape-rendering="crispEdges"><rect x="1" y="0" width="5" height="1" fill="#000"/><rect x="0" y="1" width="1" height="1" fill="#000"/><rect x="1" y="1" width="5" height="1" fill="#FFFF00"/><rect x="6" y="1" width="1" height="1" fill="#000"/><rect x="0" y="2" width="1" height="1" fill="#000"/><rect x="1" y="2" width="2" height="1" fill="#FFFF00"/><rect x="3" y="2" width="1" height="1" fill="#000"/><rect x="4" y="2" width="2" height="1" fill="#FFFF00"/><rect x="6" y="2" width="1" height="1" fill="#000"/><rect x="0" y="3" width="1" height="1" fill="#000"/><rect x="1" y="3" width="5" height="1" fill="#FFFF00"/><rect x="6" y="3" width="1" height="1" fill="#000"/><rect x="1" y="4" width="1" height="1" fill="#000"/><rect x="2" y="4" width="3" height="1" fill="#FFFF00"/><rect x="5" y="4" width="1" height="1" fill="#000"/><rect x="2" y="5" width="1" height="1" fill="#000"/><rect x="3" y="5" width="1" height="1" fill="#FFFF00"/><rect x="4" y="5" width="1" height="1" fill="#000"/><rect x="2" y="6" width="1" height="1" fill="#000"/><rect x="3" y="6" width="2" height="1" fill="#FFFF00"/><rect x="5" y="6" width="1" height="1" fill="#000"/><rect x="2" y="7" width="1" height="1" fill="#000"/><rect x="3" y="7" width="1" height="1" fill="#FFFF00"/><rect x="4" y="7" width="1" height="1" fill="#000"/><rect x="2" y="8" width="1" height="1" fill="#000"/><rect x="3" y="8" width="2" height="1" fill="#FFFF00"/><rect x="5" y="8" width="1" height="1" fill="#000"/><rect x="2" y="9" width="1" height="1" fill="#000"/><rect x="3" y="9" width="1" height="1" fill="#FFFF00"/><rect x="4" y="9" width="1" height="1" fill="#000"/><rect x="3" y="10" width="1" height="1" fill="#000"/></svg>
<div class="t" style="left:708px;top:159px;color:#000;letter-spacing:-0.421px">Refund_ID</div>
<div class="t" style="left:708px;top:182px;color:#000;letter-spacing:-0.497px">Journey_ID</div>
<div class="t" style="left:708px;top:205px;color:#000;letter-spacing:-0.382px">Refund_Request</div>
<div class="t" style="left:708px;top:228px;color:#000;letter-spacing:-0.511px">Refund_Reason</div>
<div class="t" style="left:708px;top:251px;color:#000;letter-spacing:0.048px">Refund_Amount</div>
<div class="a" style="left:682px;top:368px;width:218px;height:285px;background:#F0F0F0;border:1px solid #666;box-shadow:inset -1px -1px 0 #fff, inset 0 1px 0 #fff"></div>
<div class="t" style="left:688px;top:376px;font-weight:bold;font-size:16px;letter-spacing:-0.35px;color:#000">Journeys</div>
<div class="a" style="left:685px;top:392px;width:212px;height:258px;background:#fff;border:1px solid #A0A0A0"></div>
<div class="a" style="left:706px;top:393px;width:1px;height:230px;background:#F0F0F0"></div>
<div class="a" style="left:686px;top:416px;width:208px;height:1px;background:#F0F0F0"></div>
<div class="a" style="left:686px;top:439px;width:208px;height:1px;background:#F0F0F0"></div>
<div class="a" style="left:686px;top:462px;width:208px;height:1px;background:#F0F0F0"></div>
<div class="a" style="left:686px;top:485px;width:208px;height:1px;background:#F0F0F0"></div>
<div class="a" style="left:686px;top:508px;width:208px;height:1px;background:#F0F0F0"></div>
<div class="a" style="left:686px;top:531px;width:208px;height:1px;background:#F0F0F0"></div>
<div class="a" style="left:686px;top:554px;width:208px;height:1px;background:#F0F0F0"></div>
<div class="a" style="left:686px;top:577px;width:208px;height:1px;background:#F0F0F0"></div>
<div class="a" style="left:686px;top:600px;width:208px;height:1px;background:#F0F0F0"></div>
<div class="a" style="left:686px;top:623px;width:208px;height:1px;background:#F0F0F0"></div>
<div class="a" style="left:689px;top:398px;width:15px;height:14px;background:#F0F0F0"></div>
<svg style="left:696px;top:400px" width="7" height="11" shape-rendering="crispEdges"><rect x="1" y="0" width="5" height="1" fill="#000"/><rect x="0" y="1" width="1" height="1" fill="#000"/><rect x="1" y="1" width="5" height="1" fill="#FFFF00"/><rect x="6" y="1" width="1" height="1" fill="#000"/><rect x="0" y="2" width="1" height="1" fill="#000"/><rect x="1" y="2" width="2" height="1" fill="#FFFF00"/><rect x="3" y="2" width="1" height="1" fill="#000"/><rect x="4" y="2" width="2" height="1" fill="#FFFF00"/><rect x="6" y="2" width="1" height="1" fill="#000"/><rect x="0" y="3" width="1" height="1" fill="#000"/><rect x="1" y="3" width="5" height="1" fill="#FFFF00"/><rect x="6" y="3" width="1" height="1" fill="#000"/><rect x="1" y="4" width="1" height="1" fill="#000"/><rect x="2" y="4" width="3" height="1" fill="#FFFF00"/><rect x="5" y="4" width="1" height="1" fill="#000"/><rect x="2" y="5" width="1" height="1" fill="#000"/><rect x="3" y="5" width="1" height="1" fill="#FFFF00"/><rect x="4" y="5" width="1" height="1" fill="#000"/><rect x="2" y="6" width="1" height="1" fill="#000"/><rect x="3" y="6" width="2" height="1" fill="#FFFF00"/><rect x="5" y="6" width="1" height="1" fill="#000"/><rect x="2" y="7" width="1" height="1" fill="#000"/><rect x="3" y="7" width="1" height="1" fill="#FFFF00"/><rect x="4" y="7" width="1" height="1" fill="#000"/><rect x="2" y="8" width="1" height="1" fill="#000"/><rect x="3" y="8" width="2" height="1" fill="#FFFF00"/><rect x="5" y="8" width="1" height="1" fill="#000"/><rect x="2" y="9" width="1" height="1" fill="#000"/><rect x="3" y="9" width="1" height="1" fill="#FFFF00"/><rect x="4" y="9" width="1" height="1" fill="#000"/><rect x="3" y="10" width="1" height="1" fill="#000"/></svg>
<div class="t" style="left:714px;top:397px;color:#000;letter-spacing:-0.497px">Journey_ID</div>
<div class="t" style="left:714px;top:420px;color:#000;letter-spacing:-0.386px">Transaction_ID</div>
<div class="t" style="left:714px;top:443px;color:#000;letter-spacing:-0.64px">Passenger_ID</div>
<div class="t" style="left:714px;top:466px;color:#000;letter-spacing:-0.212px">Departure_Station</div>
<div class="t" style="left:714px;top:489px;color:#000;letter-spacing:-0.167px">Arrival_Station</div>
<div class="t" style="left:714px;top:512px;color:#000;letter-spacing:-0.371px">Date_of_Journey</div>
<div class="t" style="left:714px;top:535px;color:#000;letter-spacing:-0.22px">Departure_Time</div>
<div class="t" style="left:714px;top:558px;color:#000;letter-spacing:-0.136px">Arrival_Time</div>
<div class="t" style="left:714px;top:581px;color:#000;letter-spacing:-0.129px">Actual_Arrival_Time</div>
<div class="t" style="left:714px;top:604px;color:#000;letter-spacing:-0.383px">Journey_Status</div>
<div class="a" style="left:370px;top:459px;width:218px;height:141px;background:#F0F0F0;border:1px solid #666;box-shadow:inset -1px -1px 0 #fff, inset 0 1px 0 #fff"></div>
<div class="t" style="left:376px;top:467px;font-weight:bold;font-size:16px;letter-spacing:-0.35px;color:#000">Delays</div>
<div class="a" style="left:373px;top:483px;width:212px;height:114px;background:#fff;border:1px solid #A0A0A0"></div>
<div class="a" style="left:394px;top:484px;width:1px;height:92px;background:#F0F0F0"></div>
<div class="a" style="left:374px;top:507px;width:208px;height:1px;background:#F0F0F0"></div>
<div class="a" style="left:374px;top:530px;width:208px;height:1px;background:#F0F0F0"></div>
<div class="a" style="left:374px;top:553px;width:208px;height:1px;background:#F0F0F0"></div>
<div class="a" style="left:374px;top:576px;width:208px;height:1px;background:#F0F0F0"></div>
<div class="a" style="left:377px;top:489px;width:15px;height:14px;background:#F0F0F0"></div>
<svg style="left:384px;top:491px" width="7" height="11" shape-rendering="crispEdges"><rect x="1" y="0" width="5" height="1" fill="#000"/><rect x="0" y="1" width="1" height="1" fill="#000"/><rect x="1" y="1" width="5" height="1" fill="#FFFF00"/><rect x="6" y="1" width="1" height="1" fill="#000"/><rect x="0" y="2" width="1" height="1" fill="#000"/><rect x="1" y="2" width="2" height="1" fill="#FFFF00"/><rect x="3" y="2" width="1" height="1" fill="#000"/><rect x="4" y="2" width="2" height="1" fill="#FFFF00"/><rect x="6" y="2" width="1" height="1" fill="#000"/><rect x="0" y="3" width="1" height="1" fill="#000"/><rect x="1" y="3" width="5" height="1" fill="#FFFF00"/><rect x="6" y="3" width="1" height="1" fill="#000"/><rect x="1" y="4" width="1" height="1" fill="#000"/><rect x="2" y="4" width="3" height="1" fill="#FFFF00"/><rect x="5" y="4" width="1" height="1" fill="#000"/><rect x="2" y="5" width="1" height="1" fill="#000"/><rect x="3" y="5" width="1" height="1" fill="#FFFF00"/><rect x="4" y="5" width="1" height="1" fill="#000"/><rect x="2" y="6" width="1" height="1" fill="#000"/><rect x="3" y="6" width="2" height="1" fill="#FFFF00"/><rect x="5" y="6" width="1" height="1" fill="#000"/><rect x="2" y="7" width="1" height="1" fill="#000"/><rect x="3" y="7" width="1" height="1" fill="#FFFF00"/><rect x="4" y="7" width="1" height="1" fill="#000"/><rect x="2" y="8" width="1" height="1" fill="#000"/><rect x="3" y="8" width="2" height="1" fill="#FFFF00"/><rect x="5" y="8" width="1" height="1" fill="#000"/><rect x="2" y="9" width="1" height="1" fill="#000"/><rect x="3" y="9" width="1" height="1" fill="#FFFF00"/><rect x="4" y="9" width="1" height="1" fill="#000"/><rect x="3" y="10" width="1" height="1" fill="#000"/></svg>
<div class="t" style="left:402px;top:488px;color:#000;letter-spacing:-0.621px">Delay_ID</div>
<div class="t" style="left:402px;top:511px;color:#000;letter-spacing:-0.497px">Journey_ID</div>
<div class="t" style="left:402px;top:534px;color:#000;letter-spacing:-0.692px">Reason</div>
<div class="t" style="left:402px;top:557px;color:#000;letter-spacing:-0.232px">Delay_Duration</div>
<div class="a" style="left:988px;top:447px;width:218px;height:166px;background:#F0F0F0;border:1px solid #666;box-shadow:inset -1px -1px 0 #fff, inset 0 1px 0 #fff"></div>
<div class="t" style="left:994px;top:455px;font-weight:bold;font-size:16px;letter-spacing:-0.35px;color:#000">Passengers</div>
<div class="a" style="left:991px;top:471px;width:212px;height:139px;background:#fff;border:1px solid #A0A0A0"></div>
<div class="a" style="left:1012px;top:472px;width:1px;height:115px;background:#F0F0F0"></div>
<div class="a" style="left:992px;top:495px;width:208px;height:1px;background:#F0F0F0"></div>
<div class="a" style="left:992px;top:518px;width:208px;height:1px;background:#F0F0F0"></div>
<div class="a" style="left:992px;top:541px;width:208px;height:1px;background:#F0F0F0"></div>
<div class="a" style="left:992px;top:564px;width:208px;height:1px;background:#F0F0F0"></div>
<div class="a" style="left:992px;top:587px;width:208px;height:1px;background:#F0F0F0"></div>
<div class="a" style="left:995px;top:477px;width:15px;height:14px;background:#F0F0F0"></div>
<svg style="left:1002px;top:479px" width="7" height="11" shape-rendering="crispEdges"><rect x="1" y="0" width="5" height="1" fill="#000"/><rect x="0" y="1" width="1" height="1" fill="#000"/><rect x="1" y="1" width="5" height="1" fill="#FFFF00"/><rect x="6" y="1" width="1" height="1" fill="#000"/><rect x="0" y="2" width="1" height="1" fill="#000"/><rect x="1" y="2" width="2" height="1" fill="#FFFF00"/><rect x="3" y="2" width="1" height="1" fill="#000"/><rect x="4" y="2" width="2" height="1" fill="#FFFF00"/><rect x="6" y="2" width="1" height="1" fill="#000"/><rect x="0" y="3" width="1" height="1" fill="#000"/><rect x="1" y="3" width="5" height="1" fill="#FFFF00"/><rect x="6" y="3" width="1" height="1" fill="#000"/><rect x="1" y="4" width="1" height="1" fill="#000"/><rect x="2" y="4" width="3" height="1" fill="#FFFF00"/><rect x="5" y="4" width="1" height="1" fill="#000"/><rect x="2" y="5" width="1" height="1" fill="#000"/><rect x="3" y="5" width="1" height="1" fill="#FFFF00"/><rect x="4" y="5" width="1" height="1" fill="#000"/><rect x="2" y="6" width="1" height="1" fill="#000"/><rect x="3" y="6" width="2" height="1" fill="#FFFF00"/><rect x="5" y="6" width="1" height="1" fill="#000"/><rect x="2" y="7" width="1" height="1" fill="#000"/><rect x="3" y="7" width="1" height="1" fill="#FFFF00"/><rect x="4" y="7" width="1" height="1" fill="#000"/><rect x="2" y="8" width="1" height="1" fill="#000"/><rect x="3" y="8" width="2" height="1" fill="#FFFF00"/><rect x="5" y="8" width="1" height="1" fill="#000"/><rect x="2" y="9" width="1" height="1" fill="#000"/><rect x="3" y="9" width="1" height="1" fill="#FFFF00"/><rect x="4" y="9" width="1" height="1" fill="#000"/><rect x="3" y="10" width="1" height="1" fill="#000"/></svg>
<div class="t" style="left:1020px;top:476px;color:#000;letter-spacing:-0.64px">Passenger_ID</div>
<div class="t" style="left:1020px;top:499px;color:#000;letter-spacing:-0.442px">Passenger_Name</div>
<div class="t" style="left:1020px;top:522px;color:#000;letter-spacing:0.025px">Age</div>
<div class="t" style="left:1020px;top:545px;color:#000;letter-spacing:-0.386px">Gender</div>
<div class="t" style="left:1020px;top:568px;color:#000;letter-spacing:-0.442px">Railcard_Type</div>
<div class="a" style="left:682px;top:725px;width:218px;height:261px;background:#F0F0F0;border:1px solid #666;box-shadow:inset -1px -1px 0 #fff, inset 0 1px 0 #fff"></div>
<div class="t" style="left:688px;top:733px;font-weight:bold;font-size:16px;letter-spacing:-0.35px;color:#000">Tickets</div>
<div class="a" style="left:685px;top:749px;width:212px;height:234px;background:#fff;border:1px solid #A0A0A0"></div>
<div class="a" style="left:706px;top:750px;width:1px;height:207px;background:#F0F0F0"></div>
<div class="a" style="left:686px;top:773px;width:208px;height:1px;background:#F0F0F0"></div>
<div class="a" style="left:686px;top:796px;width:208px;height:1px;background:#F0F0F0"></div>
<div class="a" style="left:686px;top:819px;width:208px;height:1px;background:#F0F0F0"></div>
<div class="a" style="left:686px;top:842px;width:208px;height:1px;background:#F0F0F0"></div>
<div class="a" style="left:686px;top:865px;width:208px;height:1px;background:#F0F0F0"></div>
<div class="a" style="left:686px;top:888px;width:208px;height:1px;background:#F0F0F0"></div>
<div class="a" style="left:686px;top:911px;width:208px;height:1px;background:#F0F0F0"></div>
<div class="a" style="left:686px;top:934px;width:208px;height:1px;background:#F0F0F0"></div>
<div class="a" style="left:686px;top:957px;width:208px;height:1px;background:#F0F0F0"></div>
<div class="a" style="left:689px;top:755px;width:15px;height:14px;background:#F0F0F0"></div>
<svg style="left:696px;top:757px" width="7" height="11" shape-rendering="crispEdges"><rect x="1" y="0" width="5" height="1" fill="#000"/><rect x="0" y="1" width="1" height="1" fill="#000"/><rect x="1" y="1" width="5" height="1" fill="#FFFF00"/><rect x="6" y="1" width="1" height="1" fill="#000"/><rect x="0" y="2" width="1" height="1" fill="#000"/><rect x="1" y="2" width="2" height="1" fill="#FFFF00"/><rect x="3" y="2" width="1" height="1" fill="#000"/><rect x="4" y="2" width="2" height="1" fill="#FFFF00"/><rect x="6" y="2" width="1" height="1" fill="#000"/><rect x="0" y="3" width="1" height="1" fill="#000"/><rect x="1" y="3" width="5" height="1" fill="#FFFF00"/><rect x="6" y="3" width="1" height="1" fill="#000"/><rect x="1" y="4" width="1" height="1" fill="#000"/><rect x="2" y="4" width="3" height="1" fill="#FFFF00"/><rect x="5" y="4" width="1" height="1" fill="#000"/><rect x="2" y="5" width="1" height="1" fill="#000"/><rect x="3" y="5" width="1" height="1" fill="#FFFF00"/><rect x="4" y="5" width="1" height="1" fill="#000"/><rect x="2" y="6" width="1" height="1" fill="#000"/><rect x="3" y="6" width="2" height="1" fill="#FFFF00"/><rect x="5" y="6" width="1" height="1" fill="#000"/><rect x="2" y="7" width="1" height="1" fill="#000"/><rect x="3" y="7" width="1" height="1" fill="#FFFF00"/><rect x="4" y="7" width="1" height="1" fill="#000"/><rect x="2" y="8" width="1" height="1" fill="#000"/><rect x="3" y="8" width="2" height="1" fill="#FFFF00"/><rect x="5" y="8" width="1" height="1" fill="#000"/><rect x="2" y="9" width="1" height="1" fill="#000"/><rect x="3" y="9" width="1" height="1" fill="#FFFF00"/><rect x="4" y="9" width="1" height="1" fill="#000"/><rect x="3" y="10" width="1" height="1" fill="#000"/></svg>
<div class="t" style="left:714px;top:754px;color:#000;letter-spacing:-0.386px">Transaction_ID</div>
<div class="t" style="left:714px;top:777px;color:#000;letter-spacing:-0.4px">Date_of_Purchase</div>
<div class="t" style="left:714px;top:800px;color:#000;letter-spacing:-0.325px">Time_of_Purchase</div>
<div class="t" style="left:714px;top:823px;color:#000;letter-spacing:-0.507px">Purchase_Type</div>
<div class="t" style="left:714px;top:846px;color:#000;letter-spacing:-0.004px">Payment_Method</div>
<div class="t" style="left:714px;top:869px;color:#000;letter-spacing:-0.274px">Railcard</div>
<div class="t" style="left:714px;top:892px;color:#000;letter-spacing:-0.458px">Ticket_Class</div>
<div class="t" style="left:714px;top:915px;color:#000;letter-spacing:-0.395px">Ticket_Type</div>
<div class="t" style="left:714px;top:938px;color:#000;letter-spacing:-0.21px">Price</div>
<svg style="left:781px;top:295px" width="7" height="16" shape-rendering="crispEdges"><rect x="2" y="0" width="3" height="1" fill="#000"/><rect x="1" y="1" width="1" height="1" fill="#000"/><rect x="2" y="1" width="3" height="1" fill="#FFFFFF"/><rect x="5" y="1" width="1" height="1" fill="#000"/><rect x="0" y="2" width="1" height="1" fill="#000"/><rect x="1" y="2" width="5" height="1" fill="#FFFFFF"/><rect x="6" y="2" width="1" height="1" fill="#000"/><rect x="0" y="3" width="1" height="1" fill="#000"/><rect x="1" y="3" width="5" height="1" fill="#FFFFFF"/><rect x="6" y="3" width="1" height="1" fill="#000"/><rect x="0" y="4" width="1" height="1" fill="#000"/><rect x="1" y="4" width="5" height="1" fill="#FFFFFF"/><rect x="6" y="4" width="1" height="1" fill="#000"/><rect x="0" y="5" width="1" height="1" fill="#000"/><rect x="1" y="5" width="5" height="1" fill="#FFFFFF"/><rect x="6" y="5" width="1" height="1" fill="#000"/><rect x="1" y="6" width="1" height="1" fill="#000"/><rect x="2" y="6" width="3" height="1" fill="#FFFFFF"/><rect x="5" y="6" width="1" height="1" fill="#000"/><rect x="2" y="7" width="3" height="1" fill="#000"/><rect x="2" y="8" width="3" height="1" fill="#000"/><rect x="1" y="9" width="1" height="1" fill="#000"/><rect x="2" y="9" width="3" height="1" fill="#FFFFFF"/><rect x="5" y="9" width="1" height="1" fill="#000"/><rect x="0" y="10" width="1" height="1" fill="#000"/><rect x="1" y="10" width="5" height="1" fill="#FFFFFF"/><rect x="6" y="10" width="1" height="1" fill="#000"/><rect x="0" y="11" width="1" height="1" fill="#000"/><rect x="1" y="11" width="5" height="1" fill="#FFFFFF"/><rect x="6" y="11" width="1" height="1" fill="#000"/><rect x="0" y="12" width="1" height="1" fill="#000"/><rect x="1" y="12" width="5" height="1" fill="#FFFFFF"/><rect x="6" y="12" width="1" height="1" fill="#000"/><rect x="0" y="13" width="1" height="1" fill="#000"/><rect x="1" y="13" width="5" height="1" fill="#FFFFFF"/><rect x="6" y="13" width="1" height="1" fill="#000"/><rect x="1" y="14" width="1" height="1" fill="#000"/><rect x="2" y="14" width="3" height="1" fill="#FFFFFF"/><rect x="5" y="14" width="1" height="1" fill="#000"/><rect x="2" y="15" width="3" height="1" fill="#000"/></svg>
<div class="a" style="left:782px;top:311px;width:5px;height:42px;background:linear-gradient(90deg,#A0A0A0 0 1px,#E6E6E6 1px 2px,#fff 2px 3px,#C8C8C8 3px 4px,#6E6E6E 4px)"></div>
<svg style="left:780px;top:353px" width="9" height="16" shape-rendering="crispEdges"><rect x="2" y="0" width="5" height="1" fill="#000"/><rect x="1" y="1" width="1" height="1" fill="#000"/><rect x="2" y="1" width="5" height="1" fill="#FFFF00"/><rect x="7" y="1" width="1" height="1" fill="#000"/><rect x="0" y="2" width="1" height="1" fill="#000"/><rect x="1" y="2" width="3" height="1" fill="#FFFF00"/><rect x="4" y="2" width="1" height="1" fill="#000"/><rect x="5" y="2" width="3" height="1" fill="#FFFF00"/><rect x="8" y="2" width="1" height="1" fill="#000"/><rect x="0" y="3" width="1" height="1" fill="#000"/><rect x="1" y="3" width="2" height="1" fill="#FFFF00"/><rect x="3" y="3" width="3" height="1" fill="#000"/><rect x="6" y="3" width="2" height="1" fill="#FFFF00"/><rect x="8" y="3" width="1" height="1" fill="#000"/><rect x="0" y="4" width="1" height="1" fill="#000"/><rect x="1" y="4" width="2" height="1" fill="#FFFF00"/><rect x="3" y="4" width="3" height="1" fill="#000"/><rect x="6" y="4" width="2" height="1" fill="#FFFF00"/><rect x="8" y="4" width="1" height="1" fill="#000"/><rect x="0" y="5" width="1" height="1" fill="#000"/><rect x="1" y="5" width="2" height="1" fill="#FFFF00"/><rect x="3" y="5" width="3" height="1" fill="#000"/><rect x="6" y="5" width="2" height="1" fill="#FFFF00"/><rect x="8" y="5" width="1" height="1" fill="#000"/><rect x="0" y="6" width="1" height="1" fill="#000"/><rect x="1" y="6" width="3" height="1" fill="#FFFF00"/><rect x="4" y="6" width="1" height="1" fill="#000"/><rect x="5" y="6" width="3" height="1" fill="#FFFF00"/><rect x="8" y="6" width="1" height="1" fill="#000"/><rect x="1" y="7" width="1" height="1" fill="#000"/><rect x="2" y="7" width="5" height="1" fill="#FFFF00"/><rect x="7" y="7" width="1" height="1" fill="#000"/><rect x="2" y="8" width="1" height="1" fill="#000"/><rect x="3" y="8" width="3" height="1" fill="#FFFF00"/><rect x="6" y="8" width="1" height="1" fill="#000"/><rect x="3" y="9" width="1" height="1" fill="#000"/><rect x="4" y="9" width="1" height="1" fill="#FFFF00"/><rect x="5" y="9" width="1" height="1" fill="#000"/><rect x="3" y="10" width="1" height="1" fill="#000"/><rect x="4" y="10" width="2" height="1" fill="#FFFF00"/><rect x="6" y="10" width="1" height="1" fill="#000"/><rect x="3" y="11" width="1" height="1" fill="#000"/><rect x="4" y="11" width="2" height="1" fill="#FFFF00"/><rect x="6" y="11" width="2" height="1" fill="#000"/><rect x="3" y="12" width="1" height="1" fill="#000"/><rect x="4" y="12" width="1" height="1" fill="#FFFF00"/><rect x="5" y="12" width="1" height="1" fill="#000"/><rect x="3" y="13" width="1" height="1" fill="#000"/><rect x="4" y="13" width="2" height="1" fill="#FFFF00"/><rect x="6" y="13" width="2" height="1" fill="#000"/><rect x="3" y="14" width="1" height="1" fill="#000"/><rect x="4" y="14" width="2" height="1" fill="#FFFF00"/><rect x="6" y="14" width="1" height="1" fill="#000"/><rect x="3" y="15" width="1" height="1" fill="#000"/><rect x="4" y="15" width="1" height="1" fill="#FFFF00"/><rect x="5" y="15" width="1" height="1" fill="#000"/></svg>
<svg style="left:781px;top:652px" width="7" height="16" shape-rendering="crispEdges"><rect x="2" y="0" width="3" height="1" fill="#000"/><rect x="1" y="1" width="1" height="1" fill="#000"/><rect x="2" y="1" width="3" height="1" fill="#FFFFFF"/><rect x="5" y="1" width="1" height="1" fill="#000"/><rect x="0" y="2" width="1" height="1" fill="#000"/><rect x="1" y="2" width="5" height="1" fill="#FFFFFF"/><rect x="6" y="2" width="1" height="1" fill="#000"/><rect x="0" y="3" width="1" height="1" fill="#000"/><rect x="1" y="3" width="5" height="1" fill="#FFFFFF"/><rect x="6" y="3" width="1" height="1" fill="#000"/><rect x="0" y="4" width="1" height="1" fill="#000"/><rect x="1" y="4" width="5" height="1" fill="#FFFFFF"/><rect x="6" y="4" width="1" height="1" fill="#000"/><rect x="0" y="5" width="1" height="1" fill="#000"/><rect x="1" y="5" width="5" height="1" fill="#FFFFFF"/><rect x="6" y="5" width="1" height="1" fill="#000"/><rect x="1" y="6" width="1" height="1" fill="#000"/><rect x="2" y="6" width="3" height="1" fill="#FFFFFF"/><rect x="5" y="6" width="1" height="1" fill="#000"/><rect x="2" y="7" width="3" height="1" fill="#000"/><rect x="2" y="8" width="3" height="1" fill="#000"/><rect x="1" y="9" width="1" height="1" fill="#000"/><rect x="2" y="9" width="3" height="1" fill="#FFFFFF"/><rect x="5" y="9" width="1" height="1" fill="#000"/><rect x="0" y="10" width="1" height="1" fill="#000"/><rect x="1" y="10" width="5" height="1" fill="#FFFFFF"/><rect x="6" y="10" width="1" height="1" fill="#000"/><rect x="0" y="11" width="1" height="1" fill="#000"/><rect x="1" y="11" width="5" height="1" fill="#FFFFFF"/><rect x="6" y="11" width="1" height="1" fill="#000"/><rect x="0" y="12" width="1" height="1" fill="#000"/><rect x="1" y="12" width="5" height="1" fill="#FFFFFF"/><rect x="6" y="12" width="1" height="1" fill="#000"/><rect x="0" y="13" width="1" height="1" fill="#000"/><rect x="1" y="13" width="5" height="1" fill="#FFFFFF"/><rect x="6" y="13" width="1" height="1" fill="#000"/><rect x="1" y="14" width="1" height="1" fill="#000"/><rect x="2" y="14" width="3" height="1" fill="#FFFFFF"/><rect x="5" y="14" width="1" height="1" fill="#000"/><rect x="2" y="15" width="3" height="1" fill="#000"/></svg>
<div class="a" style="left:782px;top:668px;width:5px;height:42px;background:linear-gradient(90deg,#A0A0A0 0 1px,#E6E6E6 1px 2px,#fff 2px 3px,#C8C8C8 3px 4px,#6E6E6E 4px)"></div>
<svg style="left:780px;top:710px" width="9" height="16" shape-rendering="crispEdges"><rect x="2" y="0" width="5" height="1" fill="#000"/><rect x="1" y="1" width="1" height="1" fill="#000"/><rect x="2" y="1" width="5" height="1" fill="#FFFF00"/><rect x="7" y="1" width="1" height="1" fill="#000"/><rect x="0" y="2" width="1" height="1" fill="#000"/><rect x="1" y="2" width="3" height="1" fill="#FFFF00"/><rect x="4" y="2" width="1" height="1" fill="#000"/><rect x="5" y="2" width="3" height="1" fill="#FFFF00"/><rect x="8" y="2" width="1" height="1" fill="#000"/><rect x="0" y="3" width="1" height="1" fill="#000"/><rect x="1" y="3" width="2" height="1" fill="#FFFF00"/><rect x="3" y="3" width="3" height="1" fill="#000"/><rect x="6" y="3" width="2" height="1" fill="#FFFF00"/><rect x="8" y="3" width="1" height="1" fill="#000"/><rect x="0" y="4" width="1" height="1" fill="#000"/><rect x="1" y="4" width="2" height="1" fill="#FFFF00"/><rect x="3" y="4" width="3" height="1" fill="#000"/><rect x="6" y="4" width="2" height="1" fill="#FFFF00"/><rect x="8" y="4" width="1" height="1" fill="#000"/><rect x="0" y="5" width="1" height="1" fill="#000"/><rect x="1" y="5" width="2" height="1" fill="#FFFF00"/><rect x="3" y="5" width="3" height="1" fill="#000"/><rect x="6" y="5" width="2" height="1" fill="#FFFF00"/><rect x="8" y="5" width="1" height="1" fill="#000"/><rect x="0" y="6" width="1" height="1" fill="#000"/><rect x="1" y="6" width="3" height="1" fill="#FFFF00"/><rect x="4" y="6" width="1" height="1" fill="#000"/><rect x="5" y="6" width="3" height="1" fill="#FFFF00"/><rect x="8" y="6" width="1" height="1" fill="#000"/><rect x="1" y="7" width="1" height="1" fill="#000"/><rect x="2" y="7" width="5" height="1" fill="#FFFF00"/><rect x="7" y="7" width="1" height="1" fill="#000"/><rect x="2" y="8" width="1" height="1" fill="#000"/><rect x="3" y="8" width="3" height="1" fill="#FFFF00"/><rect x="6" y="8" width="1" height="1" fill="#000"/><rect x="3" y="9" width="1" height="1" fill="#000"/><rect x="4" y="9" width="1" height="1" fill="#FFFF00"/><rect x="5" y="9" width="1" height="1" fill="#000"/><rect x="3" y="10" width="1" height="1" fill="#000"/><rect x="4" y="10" width="2" height="1" fill="#FFFF00"/><rect x="6" y="10" width="1" height="1" fill="#000"/><rect x="3" y="11" width="1" height="1" fill="#000"/><rect x="4" y="11" width="2" height="1" fill="#FFFF00"/><rect x="6" y="11" width="2" height="1" fill="#000"/><rect x="3" y="12" width="1" height="1" fill="#000"/><rect x="4" y="12" width="1" height="1" fill="#FFFF00"/><rect x="5" y="12" width="1" height="1" fill="#000"/><rect x="3" y="13" width="1" height="1" fill="#000"/><rect x="4" y="13" width="2" height="1" fill="#FFFF00"/><rect x="6" y="13" width="2" height="1" fill="#000"/><rect x="3" y="14" width="1" height="1" fill="#000"/><rect x="4" y="14" width="2" height="1" fill="#FFFF00"/><rect x="6" y="14" width="1" height="1" fill="#000"/><rect x="3" y="15" width="1" height="1" fill="#000"/><rect x="4" y="15" width="1" height="1" fill="#FFFF00"/><rect x="5" y="15" width="1" height="1" fill="#000"/></svg>
<svg style="left:589px;top:524px" width="16" height="7" shape-rendering="crispEdges"><rect x="2" y="0" width="4" height="1" fill="#000"/><rect x="10" y="0" width="4" height="1" fill="#000"/><rect x="1" y="1" width="1" height="1" fill="#000"/><rect x="2" y="1" width="4" height="1" fill="#FFFFFF"/><rect x="6" y="1" width="1" height="1" fill="#000"/><rect x="9" y="1" width="1" height="1" fill="#000"/><rect x="10" y="1" width="4" height="1" fill="#FFFFFF"/><rect x="14" y="1" width="1" height="1" fill="#000"/><rect x="0" y="2" width="1" height="1" fill="#000"/><rect x="1" y="2" width="6" height="1" fill="#FFFFFF"/><rect x="7" y="2" width="2" height="1" fill="#000"/><rect x="9" y="2" width="6" height="1" fill="#FFFFFF"/><rect x="15" y="2" width="1" height="1" fill="#000"/><rect x="0" y="3" width="1" height="1" fill="#000"/><rect x="1" y="3" width="6" height="1" fill="#FFFFFF"/><rect x="7" y="3" width="2" height="1" fill="#000"/><rect x="9" y="3" width="6" height="1" fill="#FFFFFF"/><rect x="15" y="3" width="1" height="1" fill="#000"/><rect x="0" y="4" width="1" height="1" fill="#000"/><rect x="1" y="4" width="6" height="1" fill="#FFFFFF"/><rect x="7" y="4" width="2" height="1" fill="#000"/><rect x="9" y="4" width="6" height="1" fill="#FFFFFF"/><rect x="15" y="4" width="1" height="1" fill="#000"/><rect x="1" y="5" width="1" height="1" fill="#000"/><rect x="2" y="5" width="4" height="1" fill="#FFFFFF"/><rect x="6" y="5" width="1" height="1" fill="#000"/><rect x="9" y="5" width="1" height="1" fill="#000"/><rect x="10" y="5" width="4" height="1" fill="#FFFFFF"/><rect x="14" y="5" width="1" height="1" fill="#000"/><rect x="2" y="6" width="4" height="1" fill="#000"/><rect x="10" y="6" width="4" height="1" fill="#000"/></svg>
<div class="a" style="left:605px;top:525px;width:62px;height:5px;background:linear-gradient(180deg,#8A8A8A 0 1px,#fff 1px 2px,#6E6E6E 2px 4px,#C8C8C8 4px)"></div>
<svg style="left:667px;top:523px" width="16" height="9" shape-rendering="crispEdges"><rect x="2" y="0" width="5" height="1" fill="#000"/><rect x="1" y="1" width="1" height="1" fill="#000"/><rect x="2" y="1" width="5" height="1" fill="#FFFF00"/><rect x="7" y="1" width="1" height="1" fill="#000"/><rect x="0" y="2" width="1" height="1" fill="#000"/><rect x="1" y="2" width="7" height="1" fill="#FFFF00"/><rect x="8" y="2" width="1" height="1" fill="#000"/><rect x="0" y="3" width="1" height="1" fill="#000"/><rect x="1" y="3" width="2" height="1" fill="#FFFF00"/><rect x="3" y="3" width="3" height="1" fill="#000"/><rect x="6" y="3" width="3" height="1" fill="#FFFF00"/><rect x="9" y="3" width="7" height="1" fill="#000"/><rect x="0" y="4" width="1" height="1" fill="#000"/><rect x="1" y="4" width="1" height="1" fill="#FFFF00"/><rect x="2" y="4" width="5" height="1" fill="#000"/><rect x="7" y="4" width="9" height="1" fill="#FFFF00"/><rect x="0" y="5" width="1" height="1" fill="#000"/><rect x="1" y="5" width="2" height="1" fill="#FFFF00"/><rect x="3" y="5" width="3" height="1" fill="#000"/><rect x="6" y="5" width="3" height="1" fill="#FFFF00"/><rect x="9" y="5" width="1" height="1" fill="#000"/><rect x="10" y="5" width="2" height="1" fill="#FFFF00"/><rect x="12" y="5" width="1" height="1" fill="#000"/><rect x="13" y="5" width="2" height="1" fill="#FFFF00"/><rect x="15" y="5" width="1" height="1" fill="#000"/><rect x="0" y="6" width="1" height="1" fill="#000"/><rect x="1" y="6" width="7" height="1" fill="#FFFF00"/><rect x="8" y="6" width="1" height="1" fill="#000"/><rect x="10" y="6" width="2" height="1" fill="#000"/><rect x="13" y="6" width="2" height="1" fill="#000"/><rect x="1" y="7" width="1" height="1" fill="#000"/><rect x="2" y="7" width="5" height="1" fill="#FFFF00"/><rect x="7" y="7" width="1" height="1" fill="#000"/><rect x="11" y="7" width="1" height="1" fill="#000"/><rect x="13" y="7" width="1" height="1" fill="#000"/><rect x="2" y="8" width="5" height="1" fill="#000"/></svg>
<svg style="left:901px;top:524px" width="16" height="7" shape-rendering="crispEdges"><rect x="2" y="0" width="4" height="1" fill="#000"/><rect x="10" y="0" width="4" height="1" fill="#000"/><rect x="1" y="1" width="1" height="1" fill="#000"/><rect x="2" y="1" width="4" height="1" fill="#FFFFFF"/><rect x="6" y="1" width="1" height="1" fill="#000"/><rect x="9" y="1" width="1" height="1" fill="#000"/><rect x="10" y="1" width="4" height="1" fill="#FFFFFF"/><rect x="14" y="1" width="1" height="1" fill="#000"/><rect x="0" y="2" width="1" height="1" fill="#000"/><rect x="1" y="2" width="6" height="1" fill="#FFFFFF"/><rect x="7" y="2" width="2" height="1" fill="#000"/><rect x="9" y="2" width="6" height="1" fill="#FFFFFF"/><rect x="15" y="2" width="1" height="1" fill="#000"/><rect x="0" y="3" width="1" height="1" fill="#000"/><rect x="1" y="3" width="6" height="1" fill="#FFFFFF"/><rect x="7" y="3" width="2" height="1" fill="#000"/><rect x="9" y="3" width="6" height="1" fill="#FFFFFF"/><rect x="15" y="3" width="1" height="1" fill="#000"/><rect x="0" y="4" width="1" height="1" fill="#000"/><rect x="1" y="4" width="6" height="1" fill="#FFFFFF"/><rect x="7" y="4" width="2" height="1" fill="#000"/><rect x="9" y="4" width="6" height="1" fill="#FFFFFF"/><rect x="15" y="4" width="1" height="1" fill="#000"/><rect x="1" y="5" width="1" height="1" fill="#000"/><rect x="2" y="5" width="4" height="1" fill="#FFFFFF"/><rect x="6" y="5" width="1" height="1" fill="#000"/><rect x="9" y="5" width="1" height="1" fill="#000"/><rect x="10" y="5" width="4" height="1" fill="#FFFFFF"/><rect x="14" y="5" width="1" height="1" fill="#000"/><rect x="2" y="6" width="4" height="1" fill="#000"/><rect x="10" y="6" width="4" height="1" fill="#000"/></svg>
<div class="a" style="left:917px;top:525px;width:56px;height:5px;background:linear-gradient(180deg,#8A8A8A 0 1px,#fff 1px 2px,#6E6E6E 2px 4px,#C8C8C8 4px)"></div>
<svg style="left:973px;top:523px" width="16" height="9" shape-rendering="crispEdges"><rect x="2" y="0" width="5" height="1" fill="#000"/><rect x="1" y="1" width="1" height="1" fill="#000"/><rect x="2" y="1" width="5" height="1" fill="#FFFF00"/><rect x="7" y="1" width="1" height="1" fill="#000"/><rect x="0" y="2" width="1" height="1" fill="#000"/><rect x="1" y="2" width="7" height="1" fill="#FFFF00"/><rect x="8" y="2" width="1" height="1" fill="#000"/><rect x="0" y="3" width="1" height="1" fill="#000"/><rect x="1" y="3" width="2" height="1" fill="#FFFF00"/><rect x="3" y="3" width="3" height="1" fill="#000"/><rect x="6" y="3" width="3" height="1" fill="#FFFF00"/><rect x="9" y="3" width="7" height="1" fill="#000"/><rect x="0" y="4" width="1" height="1" fill="#000"/><rect x="1" y="4" width="1" height="1" fill="#FFFF00"/><rect x="2" y="4" width="5" height="1" fill="#000"/><rect x="7" y="4" width="9" height="1" fill="#FFFF00"/><rect x="0" y="5" width="1" height="1" fill="#000"/><rect x="1" y="5" width="2" height="1" fill="#FFFF00"/><rect x="3" y="5" width="3" height="1" fill="#000"/><rect x="6" y="5" width="3" height="1" fill="#FFFF00"/><rect x="9" y="5" width="1" height="1" fill="#000"/><rect x="10" y="5" width="2" height="1" fill="#FFFF00"/><rect x="12" y="5" width="1" height="1" fill="#000"/><rect x="13" y="5" width="2" height="1" fill="#FFFF00"/><rect x="15" y="5" width="1" height="1" fill="#000"/><rect x="0" y="6" width="1" height="1" fill="#000"/><rect x="1" y="6" width="7" height="1" fill="#FFFF00"/><rect x="8" y="6" width="1" height="1" fill="#000"/><rect x="10" y="6" width="2" height="1" fill="#000"/><rect x="13" y="6" width="2" height="1" fill="#000"/><rect x="1" y="7" width="1" height="1" fill="#000"/><rect x="2" y="7" width="5" height="1" fill="#FFFF00"/><rect x="7" y="7" width="1" height="1" fill="#000"/><rect x="11" y="7" width="1" height="1" fill="#000"/><rect x="13" y="7" width="1" height="1" fill="#000"/><rect x="2" y="8" width="5" height="1" fill="#000"/></svg>
<div class="a" style="left:1896px;top:131px;width:17px;height:862px;background-color:#fff;background-image:linear-gradient(45deg,#EDEDED 25%,transparent 25%,transparent 75%,#EDEDED 75%),linear-gradient(45deg,#EDEDED 25%,transparent 25%,transparent 75%,#EDEDED 75%);background-size:2px 2px;background-position:0 0,1px 1px"></div>
<div class="a" style="left:1896px;top:131px;width:17px;height:17px;background:#F0F0F0;box-shadow:inset -1px -1px 0 #696969, inset 1px 1px 0 #E3E3E3, inset -2px -2px 0 #A0A0A0, inset 2px 2px 0 #fff"></div>
<svg style="left:1900px;top:136px" width="9" height="5" viewBox="0 0 9 5" shape-rendering="crispEdges"><path d="M0 5h9L4.5 0.5z" fill="#000"/></svg>
<div class="a" style="left:1896px;top:274px;width:17px;height:580px;background:#F0F0F0;box-shadow:inset -1px -1px 0 #696969, inset 1px 1px 0 #E3E3E3, inset -2px -2px 0 #A0A0A0, inset 2px 2px 0 #fff"></div>
<div class="a" style="left:1896px;top:976px;width:17px;height:17px;background:#F0F0F0;box-shadow:inset -1px -1px 0 #696969, inset 1px 1px 0 #E3E3E3, inset -2px -2px 0 #A0A0A0, inset 2px 2px 0 #fff"></div>
<svg style="left:1900px;top:983px" width="9" height="5" viewBox="0 0 9 5" shape-rendering="crispEdges"><path d="M0 0h9L4.5 4.5z" fill="#000"/></svg>
<div class="a" style="left:370px;top:993px;width:1526px;height:17px;background-color:#fff;background-image:linear-gradient(45deg,#EDEDED 25%,transparent 25%,transparent 75%,#EDEDED 75%),linear-gradient(45deg,#EDEDED 25%,transparent 25%,transparent 75%,#EDEDED 75%);background-size:2px 2px;background-position:0 0,1px 1px"></div>
<div class="a" style="left:370px;top:993px;width:17px;height:17px;background:#F0F0F0;box-shadow:inset -1px -1px 0 #696969, inset 1px 1px 0 #E3E3E3, inset -2px -2px 0 #A0A0A0, inset 2px 2px 0 #fff"></div>
<svg style="left:377px;top:997px" width="5" height="9" viewBox="0 0 5 9" shape-rendering="crispEdges"><path d="M5 0v9L0.5 4.5z" fill="#000"/></svg>
<div class="a" style="left:552px;top:993px;width:1327px;height:17px;background:#F0F0F0;box-shadow:inset -1px -1px 0 #696969, inset 1px 1px 0 #E3E3E3, inset -2px -2px 0 #A0A0A0, inset 2px 2px 0 #fff"></div>
<div class="a" style="left:1879px;top:993px;width:17px;height:17px;background:#F0F0F0;box-shadow:inset -1px -1px 0 #696969, inset 1px 1px 0 #E3E3E3, inset -2px -2px 0 #A0A0A0, inset 2px 2px 0 #fff"></div>
<svg style="left:1886px;top:997px" width="5" height="9" viewBox="0 0 5 9" shape-rendering="crispEdges"><path d="M0 0v9l4.5-4.5z" fill="#000"/></svg>
<div class="a" style="left:1896px;top:993px;width:17px;height:17px;background:#fff"></div>
<svg style="left:1896px;top:993px" width="17" height="17" viewBox="0 0 17 17" shape-rendering="crispEdges"><path d="M8 2h1v13H8zM2 8h13v1H2z" fill="#000"/><path d="M8.5 0L6 3h5zM8.5 17L6 14h5zM0 8.5L3 6v5zM17 8.5L14 6v5z" fill="#000"/><path d="M6 4h5v1H6zM6 12h5v1H6zM4 6h1v5H4zM12 6h1v5h-1z" fill="#000"/></svg>
<!-- STATUS BAR -->
<div class="a" style="left:0;top:1017px;width:1920px;height:23px;background:#007ACC"></div>
<svg style="left:4px;top:1023px" width="17" height="11" viewBox="0 0 17 11"><path d="M4 0.8h12l-3 9.4H1z" fill="none" stroke="#fff" stroke-width="1.3"/></svg>
<div class="t" style="left:28px;top:1021px;color:#fff;letter-spacing:-0.1px">Ready</div>
<!-- TASKBAR -->
<div class="a" style="left:0;top:1040px;width:1920px;height:40px;background:#1B2631"></div>
<svg style="left:15px;top:1051px" width="18" height="18" viewBox="0 0 18 18"><path d="M0.6 2.4L5.8 1.7V8H0.6zM7.4 1.5L17.3 0.2V8H7.4zM0.6 9.6H5.8V16L0.6 15.3zM7.4 9.6H17.3V17.6L7.4 16.3z" fill="#fff"/></svg>
<svg style="left:60px;top:1048px" width="24" height="24" viewBox="0 0 24 24"><circle cx="14.3" cy="10" r="7.5" fill="none" stroke="#fff" stroke-width="1.7"/><path d="M8.8 15.2L2 22" stroke="#fff" stroke-width="1.9" stroke-linecap="round"/></svg>
<svg style="left:111px;top:1049px" width="24" height="22" viewBox="0 0 24 22">
<defs><linearGradient id="cpA" x1="0" y1="0" x2="0.3" y2="1"><stop offset="0" stop-color="#2F6FE3"/><stop offset="0.4" stop-color="#22A9C9"/><stop offset="0.7" stop-color="#8CC63F"/><stop offset="1" stop-color="#F3C323"/></linearGradient>
<linearGradient id="cpB" x1="0.7" y1="0" x2="0.3" y2="1"><stop offset="0" stop-color="#A84FE0"/><stop offset="0.5" stop-color="#D66FA0"/><stop offset="1" stop-color="#F0A24A"/></linearGradient></defs>
<path d="M6 1h9.5c1.5 0 2 .8 1.6 2L13 15.5c-.6 1.8-1.6 2.5-3.2 2.5H2.5C1 18 .6 17.3 1 16L4.3 3C4.7 1.7 5 1 6 1z" fill="url(#cpA)"/>
<path d="M12.3 4.5h8.6c1.6 0 2.3.8 2 2.2l-2.4 11.8c-.4 1.8-1.6 2.8-3.4 2.8H8.5c-1.5 0-2-.8-1.6-2l3.4-12.6c.4-1.5 1-2.2 2-2.2z" fill="url(#cpB)"/>
<path d="M11.2 7h4.5l-2.2 8.5H9z" fill="#1B2631"/>
</svg>
<svg style="left:159px;top:1050px" width="22" height="19" viewBox="0 0 22 19">
<path d="M0 1.5h7l1.5 1.5H22v16H0z" fill="#F6CE5B"/><path d="M0 4h22v15H0z" fill="#FBDA7B"/>
<path d="M4 9.5h14V19h-4v-5H8v5H4z" fill="#3C8FDD"/><rect x="8" y="15" width="6" height="4" fill="#F6CE5B"/>
</svg>
<div class="t" style="left:186px;top:1052px;color:#fff;letter-spacing:-0.25px;">File Explorer</div>
<svg style="left:319px;top:1049px" width="21" height="22" viewBox="0 0 21 22">
<path d="M5 0.5h10l5.5 5.5v15.5H5z" fill="#F2F2F2" stroke="#D8D8D8" stroke-width="0.8"/><path d="M15 0.5v5.5h5.5" fill="#DADADA"/>
<rect x="0.5" y="6" width="10" height="10" fill="#1D7A43"/><path d="M3 8.5l5 5M8 8.5l-5 5" stroke="#fff" stroke-width="1.8"/>
<path d="M12 9h6M12 12h6" stroke="#3AA567" stroke-width="1.3"/>
</svg>
<div class="t" style="left:346px;top:1052px;color:#fff;letter-spacing:-0.3px;">cleaned_railway Pr...</div>
<svg style="left:481px;top:1049px" width="24" height="23" viewBox="0 0 24 23">
<path d="M6 6V2.5C6 1.5 6.5 1 7.5 1h9c1 0 1.5.5 1.5 1.5V6" fill="none" stroke="#3A8FE0" stroke-width="1.8"/>
<rect x="0.5" y="5" width="23" height="17.5" rx="2.5" fill="#F4F4F4"/>
<rect x="7.5" y="9" width="4" height="4" fill="#E2601E"/><rect x="12.5" y="9" width="4" height="4" fill="#7CB52E"/>
<rect x="7.5" y="14" width="4" height="4" fill="#2FA0EC"/><rect x="12.5" y="14" width="4" height="4" fill="#F6C215"/>
</svg>
<svg style="left:530px;top:1048px" width="25" height="24" viewBox="0 0 25 24">
<path d="M0.5 8L12.5 0.5 24.5 8v15.5H0.5z" fill="#1F64C7"/><path d="M0.5 8h24v15.5H0.5z" fill="#3D93E8"/>
<path d="M3 8h19l-9.5 6z" fill="#F4F4F4"/><path d="M0.5 23.5L12.5 12l12 11.5z" fill="#5DAEF2"/>
</svg>
<svg style="left:579px;top:1049px" width="25" height="22" viewBox="0 0 25 22">
<rect x="6" y="0" width="18.5" height="22" fill="#21A366"/><rect x="6" y="0" width="18.5" height="7" fill="#33C481"/><rect x="15" y="7" width="9.5" height="7.5" fill="#107C41"/><rect x="6" y="14.5" width="18.5" height="7.5" fill="#185C37"/>
<rect x="0" y="5" width="12.5" height="12.5" fill="#107C41"/><path d="M3.5 8l5 6.5M8.5 8l-5 6.5" stroke="#fff" stroke-width="1.8"/>
</svg>
<svg style="left:628px;top:1049px" width="25" height="22" viewBox="0 0 25 22">
<rect x="6" y="0" width="18.5" height="22" fill="#2B7CD3"/><rect x="6" y="0" width="18.5" height="6" fill="#41A5EE"/><rect x="6" y="11" width="18.5" height="5.5" fill="#185ABD"/><rect x="6" y="16.5" width="18.5" height="5.5" fill="#103F91"/>
<rect x="0" y="5" width="12.5" height="12.5" fill="#185ABD"/><path d="M2 8l1.8 6.5L6.2 9l2.4 5.5L10.5 8" stroke="#fff" stroke-width="1.4" fill="none"/>
</svg>
<svg style="left:677px;top:1049px" width="25" height="22" viewBox="0 0 25 22">
<circle cx="14" cy="11" r="10.8" fill="#D35230"/><path d="M14 0.2A10.8 10.8 0 0 1 24.8 11H14z" fill="#FF8F6B"/><path d="M14 11h10.8A10.8 10.8 0 0 1 14 21.8z" fill="#C43E1C"/><path d="M14 0.2A10.8 10.8 0 0 1 24.8 11" fill="#F2A65A"/>
<rect x="0" y="5" width="12.5" height="12.5" fill="#C43E1C"/><path d="M4.5 15V8h3c1.5 0 2.3.8 2.3 2s-.8 2-2.3 2h-3" stroke="#fff" stroke-width="1.6" fill="none"/>
</svg>
<svg style="left:724px;top:1048px" width="24" height="24" viewBox="0 0 24 24"><circle cx="12" cy="12" r="11.5" fill="#DB4437"/><path d="M12 12L2 6.2A11.5 11.5 0 0 0 7.3 22.5z" fill="#0F9D58"/><path d="M12 12l-4.7 10.5A11.5 11.5 0 0 0 22 6.2z" fill="#F4B400"/><path d="M12 12L22 6.2A11.5 11.5 0 0 0 2 6.2z" fill="#DB4437"/><circle cx="12" cy="12" r="5.3" fill="#fff"/><circle cx="12" cy="12" r="4.2" fill="#4285F4"/></svg>
<div class="t" style="left:752px;top:1052px;color:#fff;letter-spacing:-0.3px;">ChatGPT - Google ...</div>
<div class="a" style="left:874px;top:1040px;width:161px;height:40px;background:#47494E"></div>
<svg style="left:885px;top:1048px" width="24" height="23" viewBox="0 0 24 23">
 <path d="M0.8 16.5v5h5" stroke="#1E9A3C" stroke-width="2.2" fill="none"/>
 <path d="M16.5 2h5v5" stroke="#1E9A3C" stroke-width="2.2" fill="none"/>
 <path d="M2 3c0-1.3 1.5-2 5-2s5 .7 5 2v14c0 1.3-1.5 2-4 2s-6-.7-6-2z" fill="#FFD77A"/>
 <rect x="7" y="4" width="5" height="9" fill="#FFF000"/>
 <path d="M10.5 22l8-9M13.5 13.5l7 7.5" stroke="#B050C8" stroke-width="1.5"/>
</svg>
<div class="t" style="left:913px;top:1052px;color:#fff;letter-spacing:-0.62px;">DESKTOP-0H356Q2...</div>
<svg style="left:1046px;top:1048px" width="24" height="24" viewBox="0 0 24 24"><path fill="#fff" d="M22.2819 9.8211a5.9847 5.9847 0 0 0-.5157-4.9108 6.0462 6.0462 0 0 0-6.5098-2.9A6.0651 6.0651 0 0 0 4.9807 4.1818a5.9847 5.9847 0 0 0-3.9977 2.9 6.0462 6.0462 0 0 0 .7427 7.0966 5.98 5.98 0 0 0 .511 4.9107 6.051 6.051 0 0 0 6.5146 2.9001A5.9847 5.9847 0 0 0 13.2599 24a6.0557 6.0557 0 0 0 5.7718-4.2058 5.9894 5.9894 0 0 0 3.9977-2.9001 6.0557 6.0557 0 0 0-.7475-7.0729zm-9.022 12.6081a4.4755 4.4755 0 0 1-2.8764-1.0408l.1419-.0804 4.7783-2.7582a.7948.7948 0 0 0 .3927-.6813v-6.7369l2.02 1.1686a.071.071 0 0 1 .038.052v5.5826a4.504 4.504 0 0 1-4.4945 4.4944zm-9.6607-4.1254a4.4708 4.4708 0 0 1-.5346-3.0137l.142.0852 4.783 2.7582a.7712.7712 0 0 0 .7806 0l5.8428-3.3685v2.3324a.0804.0804 0 0 1-.0332.0615L9.74 19.9502a4.4992 4.4992 0 0 1-6.1408-1.6464zM2.3408 7.8956a4.485 4.485 0 0 1 2.3655-1.9728V11.6a.7664.7664 0 0 0 .3879.6765l5.8144 3.3543-2.0201 1.1685a.0757.0757 0 0 1-.071 0l-4.8303-2.7865A4.504 4.504 0 0 1 2.3408 7.872zm16.5963 3.8558L13.1038 8.364 15.1192 7.2a.0757.0757 0 0 1 .071 0l4.8303 2.7913a4.4944 4.4944 0 0 1-.6765 8.1042v-5.6772a.79.79 0 0 0-.407-.667zm2.0107-3.0231l-.142-.0852-4.7735-2.7818a.7759.7759 0 0 0-.7854 0L9.409 9.2297V6.8974a.0662.0662 0 0 1 .0284-.0615l4.8303-2.7866a4.4992 4.4992 0 0 1 6.6802 4.66zM8.3065 12.863l-2.02-1.1638a.0804.0804 0 0 1-.038-.0567V6.0742a4.4992 4.4992 0 0 1 7.3757-3.4537l-.142.0805L8.704 5.459a.7948.7948 0 0 0-.3927.6813zm1.0976-2.3654l2.602-1.4998 2.6069 1.4998v2.9994l-2.5974 1.4997-2.6067-1.4997Z"/></svg>
<div class="t" style="left:1074px;top:1052px;color:#fff;letter-spacing:-0.2px">الاتصال بملف SQL</div>
<svg style="left:1206px;top:1047px" width="27" height="27" viewBox="0 0 27 27">
<path d="M12.5 1.5a10.5 10.5 0 0 0-9 16L2 23l5.8-1.5A10.5 10.5 0 1 0 12.5 1.5z" fill="#1B2631" stroke="#25D366" stroke-width="2.2"/>
<path d="M8.5 7.5c.5-1 1.5-1 2 0l1 2c.3.6 0 1-.5 1.5-.4.4-.3.8 0 1.3.8 1.2 1.8 2.2 3 2.8.5.3.9.3 1.2-.1.5-.5.9-.8 1.5-.5l2 1c.8.4.7 1.3 0 2-1 1-2.5 1.3-4 .6-3-1.3-5.5-3.8-6.7-6.8-.5-1.4-.3-2.8.5-3.8z" fill="#25D366"/>
<circle cx="19.5" cy="19.5" r="7" fill="#3A424B" stroke="#1B2631" stroke-width="1.5"/>
<text x="19.5" y="24" text-anchor="middle" font-family="Liberation Sans" font-size="12" font-weight="bold" fill="#fff">6</text>
</svg>
<div class="t" style="left:1236px;top:1052px;color:#fff;letter-spacing:-0.2px;">WhatsApp</div>
<div class="a" style="left:152px;top:1078px;width:152px;height:2px;background:#76B9ED"></div>
<div class="a" style="left:312px;top:1078px;width:152px;height:2px;background:#76B9ED"></div>
<div class="a" style="left:718px;top:1078px;width:151px;height:2px;background:#76B9ED"></div>
<div class="a" style="left:874px;top:1078px;width:161px;height:2px;background:#76B9ED"></div>
<div class="a" style="left:1040px;top:1078px;width:151px;height:2px;background:#76B9ED"></div>
<div class="a" style="left:1201px;top:1078px;width:152px;height:2px;background:#76B9ED"></div>
<svg style="left:1700px;top:1055px" width="14" height="9" viewBox="0 0 14 9"><path d="M1 8L7 1.5 13 8" stroke="#fff" stroke-width="1.3" fill="none"/></svg>
<svg style="left:1722px;top:1053px" width="18" height="13" viewBox="0 0 18 13"><path d="M2 0v3M5 0v3" stroke="#fff" stroke-width="1"/><path d="M0.5 3h6v3l-1.5 2H2L0.5 6z" fill="#fff"/><path d="M3.5 8v2.5H5" stroke="#fff" fill="none"/>
<rect x="5.5" y="4" width="10.5" height="8" fill="none" stroke="#fff" stroke-width="1.2"/><rect x="16" y="6.5" width="1.5" height="3" fill="#fff"/><rect x="7" y="6" width="3.5" height="4.5" fill="#fff"/></svg>
<svg style="left:1747px;top:1053px" width="17" height="14" viewBox="0 0 17 14"><path d="M0.7 4.5h3L7.5 1v12L3.7 9.5h-3z" fill="none" stroke="#fff" stroke-width="1.2"/><path d="M10 4.5c1 1.5 1 3.5 0 5M12.3 2.8c1.8 2.5 1.8 6 0 8.5" stroke="#fff" stroke-width="1.2" fill="none"/><path d="M14.6 1c2.5 3.5 2.5 8.5 0 12" stroke="#9AA0A6" stroke-width="1" fill="none"/></svg>
<div class="t" style="left:1781px;top:1053px;color:#fff;font-size:13px">ع</div>
<div class="t" style="left:1814px;top:1043px;color:#fff;letter-spacing:-0.1px">7:53 PM</div>
<div class="t" style="left:1811px;top:1061px;color:#fff;letter-spacing:-0.1px">3/7/2025</div>
<svg style="left:1878px;top:1051px" width="28" height="26" viewBox="0 0 28 26"><path d="M0.5 0.5h17v12.5h-9l-4 4v-4h-4z" fill="#fff"/><path d="M3.5 4h11M3.5 7h11M3.5 10h7" stroke="#1B2631" stroke-width="1.2"/>
<circle cx="16.5" cy="16.5" r="8" fill="#2C3540" stroke="#6C737B" stroke-width="1.2"/><text x="16.5" y="21" text-anchor="middle" font-family="Liberation Sans" font-size="12" fill="#fff">3</text></svg>
<div class="a" style="left:1915px;top:1040px;width:1px;height:40px;background:#6E757C"></div>
<!-- WATERMARK -->
<svg style="left:0;top:0" width="1920" height="1080" viewBox="0 0 1920 1080">
<g opacity="0.42" fill="#AEAEAE" stroke="#AEAEAE">
 <path d="M864 981A17 17 0 1 0 884 997V957" fill="none" stroke-width="10.5" stroke-linecap="round"/>
 <circle cx="921.3" cy="991.3" r="15.3" fill="none" stroke-width="9.6"/>
 <path d="M921 1002H1045" fill="none" stroke-width="10" />
 <path d="M962.5 986L961.5 1002M984 986L983 1002M1001.5 981.5L1000.5 1002M1017.5 979L1016.5 1002" fill="none" stroke-width="10" stroke-linecap="round"/>
 <circle cx="1052.5" cy="997.5" r="16" fill="none" stroke-width="10"/>
 <g stroke="none"><circle cx="913.5" cy="959" r="6.6"/><circle cx="929.8" cy="959" r="6.6"/><circle cx="954" cy="973" r="6.6"/><circle cx="970.6" cy="973" r="6.6"/></g>
 <text x="843" y="1050" font-family="Liberation Sans" font-weight="bold" font-size="37" stroke="none" letter-spacing="-0.3">mostaql.com</text>
</g>
</svg>
</body></html>
